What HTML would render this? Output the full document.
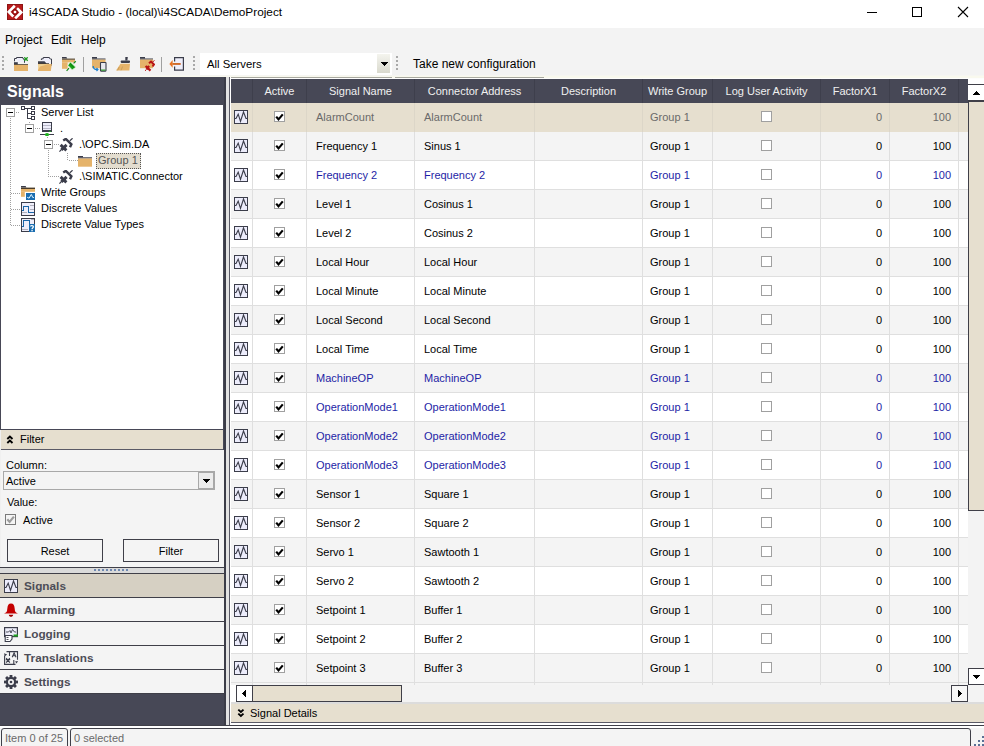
<!DOCTYPE html>
<html><head><meta charset="utf-8"><style>
html,body{margin:0;padding:0;}
body{width:984px;height:746px;overflow:hidden;position:relative;background:#f3f3f3;font-family:"Liberation Sans",sans-serif;}
.b{position:absolute;}
.t{position:absolute;white-space:nowrap;}
</style></head><body>
<div class="b" style="left:0px;top:0px;width:984px;height:28px;background:#fff;"></div>
<svg class="b" style="left:7px;top:4px" width="16" height="16" viewBox="0 0 16 16"><rect x="0.5" y="0.5" width="15" height="15" fill="#b81b1b" stroke="#8e1414"/><path d="M7.8 1.8 L1.7 7.9 L6.3 12.5" fill="none" stroke="#fff" stroke-width="2.7"/><path d="M10.0 4.2 L14.2 8.4 L8.2 14.4" fill="none" stroke="#fff" stroke-width="2.7"/><circle cx="8" cy="8" r="2.5" fill="none" stroke="#7e1010" stroke-width="0.9"/><circle cx="8" cy="8" r="1.3" fill="#fff"/></svg>
<div class="t" style="left:29px;top:7.01px;font-size:11.8px;line-height:11.8px;color:#000;">i4SCADA Studio - (local)\i4SCADA\DemoProject</div>
<svg class="b" style="left:860px;top:0px" width="124" height="28" viewBox="0 0 124 28" shape-rendering="crispEdges"><rect x="7" y="12" width="10" height="1" fill="#000"/><rect x="52.5" y="7.5" width="9" height="9" fill="none" stroke="#000" stroke-width="1"/></svg>
<svg class="b" style="left:957px;top:6px" width="12" height="12" viewBox="0 0 12 12"><path d="M1 1 L11 11 M11 1 L1 11" stroke="#000" stroke-width="1.1"/></svg>
<div class="b" style="left:0px;top:28px;width:984px;height:49px;background:#f3f3f3;"></div>
<div class="t" style="left:5px;top:33.84px;font-size:12px;line-height:12px;color:#000;">Project</div>
<div class="t" style="left:51px;top:33.84px;font-size:12px;line-height:12px;color:#000;">Edit</div>
<div class="t" style="left:81px;top:33.84px;font-size:12px;line-height:12px;color:#000;">Help</div>
<div class="b" style="left:2px;top:56px;width:2px;height:2px;background:#a9a9a9;"></div>
<div class="b" style="left:2px;top:60px;width:2px;height:2px;background:#a9a9a9;"></div>
<div class="b" style="left:2px;top:64px;width:2px;height:2px;background:#a9a9a9;"></div>
<div class="b" style="left:2px;top:68px;width:2px;height:2px;background:#a9a9a9;"></div>
<div class="b" style="left:193px;top:56px;width:2px;height:2px;background:#a9a9a9;"></div>
<div class="b" style="left:193px;top:60px;width:2px;height:2px;background:#a9a9a9;"></div>
<div class="b" style="left:193px;top:64px;width:2px;height:2px;background:#a9a9a9;"></div>
<div class="b" style="left:193px;top:68px;width:2px;height:2px;background:#a9a9a9;"></div>
<div class="b" style="left:396px;top:56px;width:2px;height:2px;background:#a9a9a9;"></div>
<div class="b" style="left:396px;top:60px;width:2px;height:2px;background:#a9a9a9;"></div>
<div class="b" style="left:396px;top:64px;width:2px;height:2px;background:#a9a9a9;"></div>
<div class="b" style="left:396px;top:68px;width:2px;height:2px;background:#a9a9a9;"></div>
<div class="b" style="left:83px;top:57px;width:1px;height:15px;background:#a0a0a0;"></div>
<div class="b" style="left:161px;top:57px;width:1px;height:15px;background:#a0a0a0;"></div>
<svg class="b" style="left:14px;top:57px" width="15" height="15" viewBox="0 0 15 15"><rect x="3" y="1" width="7" height="4" fill="#eeeefa"/><path d="M0.5 4.3 V1.5 H2.5 V0.5 H9 M8.6 1.4 H9.6 V2.4 H10.5 V5.8" fill="none" stroke="#3b3d4a" stroke-width="1"/><rect x="0" y="5.2" width="3.8" height="2.2" fill="#3b3d4a"/><rect x="0" y="7.2" width="14" height="0.8" fill="#4a3c2a"/><rect x="0" y="8" width="14" height="6" fill="#e5b36a"/><path d="M10.3 0.3 L13.7 3.7 M13.7 0.3 L10.3 3.7" stroke="#1a9a1a" stroke-width="1.3"/></svg>
<svg class="b" style="left:38px;top:57px" width="15" height="15" viewBox="0 0 15 15"><rect x="4" y="1" width="8" height="5" fill="#eeeefa"/><path d="M3.4 3 V1.8 H5.2 V0.5 H11.7 M11.3 1 L12.3 2 H13.5 V8.5" fill="none" stroke="#3b3d4a" stroke-width="1"/><path d="M0 4.3 H6.5 L8.5 6.5 H11 V7 H0 Z" fill="#3b3d4a"/><rect x="0" y="6.5" width="11" height="0.5" fill="#4a3c2a"/><path d="M0 7 H13.8 L12.8 14 H0 Z" fill="#e5b36a"/><path d="M0 7.2 H10 L2 9.5 L0 13 Z" fill="#f0d49a"/></svg>
<svg class="b" style="left:62px;top:57px" width="15" height="15" viewBox="0 0 15 15"><path d="M0 0 H4.4 L5.2 1.6 H0 Z" fill="#3b3d4a"/><rect x="0" y="1.6" width="13" height="1.2" fill="#4a3c2a"/><rect x="0" y="2.8" width="13" height="2.6" fill="#e5b36a"/><rect x="0" y="5.3" width="5.6" height="6.5" fill="#e5b36a"/><path d="M5.8 8.3 L8.4 5 L13.8 10.2 L10.2 12.9 Z" fill="#16a016" stroke="#e8f8e0" stroke-width="0.8"/><path d="M8.2 6.5 L12 10.8" stroke="#0a7a0a" stroke-width="0.8"/><path d="M4.6 13.8 L7 11.2 M11.6 6.4 L13.8 4.3" stroke="#1a8a1a" stroke-width="1.2"/></svg>
<svg class="b" style="left:92px;top:57px" width="15" height="15" viewBox="0 0 15 15"><rect x="0" y="0" width="5" height="1.6" fill="#3b3d4a"/><rect x="0" y="1.5" width="13.5" height="1.1" fill="#3b3d4a"/><rect x="0" y="2.6" width="13.5" height="8.6" fill="#e5b36a"/><rect x="8.5" y="5.5" width="5.5" height="8.6" rx="0.5" fill="#e8e8ee" stroke="#3b3d4a" stroke-width="1.1"/><rect x="9" y="12.5" width="4.5" height="1.2" fill="#30a030"/><path d="M1.2 9 Q1.2 12.5 5 12.5" fill="none" stroke="#1a7fd0" stroke-width="1.3"/><path d="M4.5 11 L6 12.5 L4.5 14" fill="none" stroke="#1a7fd0" stroke-width="1.1"/></svg>
<svg class="b" style="left:116px;top:57px" width="15" height="15" viewBox="0 0 15 15"><path d="M9.3 0 H11.8 L11.4 3.6 H9.3 Z" fill="#3b3d4a"/><rect x="4.7" y="3.4" width="9.3" height="2.5" rx="0.8" fill="#3b3d4a"/><path d="M4.5 6.8 H14 L13.4 13.6 H0 Z" fill="#e5b36a"/><path d="M3.2 10 L1.6 13.4 M6.6 9.5 L5 13.4" stroke="#b89050" stroke-width="0.6"/></svg>
<svg class="b" style="left:140px;top:57px" width="15" height="15" viewBox="0 0 15 15"><rect x="0" y="0" width="5" height="1.6" fill="#3b3d4a"/><rect x="0" y="1.5" width="13" height="1.1" fill="#3b3d4a"/><rect x="0" y="2.6" width="13" height="8.6" fill="#e5b36a"/><path d="M5.6 9 L10.5 13.6 M9 8.8 L6.5 12.5" stroke="#b81414" stroke-width="2.2"/><path d="M9 6.2 L11 4.5 L14 7.5 L12.5 9.5" fill="none" stroke="#b81414" stroke-width="2"/><path d="M12.5 5 L14.5 3.5 M5 13.8 L6.3 12.6" stroke="#b81414" stroke-width="1"/></svg>
<svg class="b" style="left:169px;top:57px" width="16" height="15" viewBox="0 0 16 15"><rect x="5.6" y="0.6" width="9" height="12.6" fill="#eeeefa"/><path d="M5.6 4.6 V0.6 H14.4 V13.2 H5.6 V9.6" fill="none" stroke="#3b3d4a" stroke-width="1.2"/><path d="M0.4 6.9 L3.6 3.1 V10.7 Z" fill="#e87020"/><rect x="3.4" y="6" width="8.3" height="1.9" fill="#d06a28"/></svg>
<div class="b" style="left:200px;top:53px;width:192px;height:22px;background:#fff;"></div>
<div class="t" style="left:207px;top:59.13px;font-size:11.3px;line-height:11.3px;color:#000;">All Servers</div>
<div class="b" style="left:377px;top:54px;width:13px;height:19px;background:linear-gradient(#f4f4ee,#d9d9cd);"></div>
<svg class="b" style="left:381px;top:62px" width="7" height="4" viewBox="0 0 7 4" shape-rendering="crispEdges"><path d="M0 0 H7 L3.5 4 Z" fill="#000"/></svg>
<div class="t" style="left:413px;top:58.14px;font-size:12px;line-height:12px;color:#000;">Take new configuration</div>
<div class="b" style="left:0px;top:75px;width:984px;height:1px;background:#f6f6f2;"></div>
<div class="b" style="left:0px;top:76px;width:984px;height:1px;background:#f9f9ee;"></div>
<div class="b" style="left:0px;top:77px;width:226px;height:649px;background:#474856;"></div>
<div class="b" style="left:224px;top:77px;width:2px;height:649px;background:#3c3d48;"></div>
<div class="t" style="left:7px;top:83.86px;font-size:16px;line-height:16px;color:#fff;font-weight:bold;">Signals</div>
<div class="b" style="left:0px;top:105px;width:224px;height:325px;background:#474856;"></div>
<div class="b" style="left:1px;top:105px;width:222px;height:324px;background:#fff;"></div>
<div class="b" style="left:10px;top:118px;width:1px;height:1px;background:#a0a0a0;"></div>
<div class="b" style="left:10px;top:120px;width:1px;height:1px;background:#a0a0a0;"></div>
<div class="b" style="left:10px;top:122px;width:1px;height:1px;background:#a0a0a0;"></div>
<div class="b" style="left:10px;top:124px;width:1px;height:1px;background:#a0a0a0;"></div>
<div class="b" style="left:10px;top:126px;width:1px;height:1px;background:#a0a0a0;"></div>
<div class="b" style="left:10px;top:128px;width:1px;height:1px;background:#a0a0a0;"></div>
<div class="b" style="left:10px;top:130px;width:1px;height:1px;background:#a0a0a0;"></div>
<div class="b" style="left:10px;top:132px;width:1px;height:1px;background:#a0a0a0;"></div>
<div class="b" style="left:10px;top:134px;width:1px;height:1px;background:#a0a0a0;"></div>
<div class="b" style="left:10px;top:136px;width:1px;height:1px;background:#a0a0a0;"></div>
<div class="b" style="left:10px;top:138px;width:1px;height:1px;background:#a0a0a0;"></div>
<div class="b" style="left:10px;top:140px;width:1px;height:1px;background:#a0a0a0;"></div>
<div class="b" style="left:10px;top:142px;width:1px;height:1px;background:#a0a0a0;"></div>
<div class="b" style="left:10px;top:144px;width:1px;height:1px;background:#a0a0a0;"></div>
<div class="b" style="left:10px;top:146px;width:1px;height:1px;background:#a0a0a0;"></div>
<div class="b" style="left:10px;top:148px;width:1px;height:1px;background:#a0a0a0;"></div>
<div class="b" style="left:10px;top:150px;width:1px;height:1px;background:#a0a0a0;"></div>
<div class="b" style="left:10px;top:152px;width:1px;height:1px;background:#a0a0a0;"></div>
<div class="b" style="left:10px;top:154px;width:1px;height:1px;background:#a0a0a0;"></div>
<div class="b" style="left:10px;top:156px;width:1px;height:1px;background:#a0a0a0;"></div>
<div class="b" style="left:10px;top:158px;width:1px;height:1px;background:#a0a0a0;"></div>
<div class="b" style="left:10px;top:160px;width:1px;height:1px;background:#a0a0a0;"></div>
<div class="b" style="left:10px;top:162px;width:1px;height:1px;background:#a0a0a0;"></div>
<div class="b" style="left:10px;top:164px;width:1px;height:1px;background:#a0a0a0;"></div>
<div class="b" style="left:10px;top:166px;width:1px;height:1px;background:#a0a0a0;"></div>
<div class="b" style="left:10px;top:168px;width:1px;height:1px;background:#a0a0a0;"></div>
<div class="b" style="left:10px;top:170px;width:1px;height:1px;background:#a0a0a0;"></div>
<div class="b" style="left:10px;top:172px;width:1px;height:1px;background:#a0a0a0;"></div>
<div class="b" style="left:10px;top:174px;width:1px;height:1px;background:#a0a0a0;"></div>
<div class="b" style="left:10px;top:176px;width:1px;height:1px;background:#a0a0a0;"></div>
<div class="b" style="left:10px;top:178px;width:1px;height:1px;background:#a0a0a0;"></div>
<div class="b" style="left:10px;top:180px;width:1px;height:1px;background:#a0a0a0;"></div>
<div class="b" style="left:10px;top:182px;width:1px;height:1px;background:#a0a0a0;"></div>
<div class="b" style="left:10px;top:184px;width:1px;height:1px;background:#a0a0a0;"></div>
<div class="b" style="left:10px;top:186px;width:1px;height:1px;background:#a0a0a0;"></div>
<div class="b" style="left:10px;top:188px;width:1px;height:1px;background:#a0a0a0;"></div>
<div class="b" style="left:10px;top:190px;width:1px;height:1px;background:#a0a0a0;"></div>
<div class="b" style="left:10px;top:192px;width:1px;height:1px;background:#a0a0a0;"></div>
<div class="b" style="left:10px;top:194px;width:1px;height:1px;background:#a0a0a0;"></div>
<div class="b" style="left:10px;top:196px;width:1px;height:1px;background:#a0a0a0;"></div>
<div class="b" style="left:10px;top:198px;width:1px;height:1px;background:#a0a0a0;"></div>
<div class="b" style="left:10px;top:200px;width:1px;height:1px;background:#a0a0a0;"></div>
<div class="b" style="left:10px;top:202px;width:1px;height:1px;background:#a0a0a0;"></div>
<div class="b" style="left:10px;top:204px;width:1px;height:1px;background:#a0a0a0;"></div>
<div class="b" style="left:10px;top:206px;width:1px;height:1px;background:#a0a0a0;"></div>
<div class="b" style="left:10px;top:208px;width:1px;height:1px;background:#a0a0a0;"></div>
<div class="b" style="left:10px;top:210px;width:1px;height:1px;background:#a0a0a0;"></div>
<div class="b" style="left:10px;top:212px;width:1px;height:1px;background:#a0a0a0;"></div>
<div class="b" style="left:10px;top:214px;width:1px;height:1px;background:#a0a0a0;"></div>
<div class="b" style="left:10px;top:216px;width:1px;height:1px;background:#a0a0a0;"></div>
<div class="b" style="left:10px;top:218px;width:1px;height:1px;background:#a0a0a0;"></div>
<div class="b" style="left:10px;top:220px;width:1px;height:1px;background:#a0a0a0;"></div>
<div class="b" style="left:10px;top:222px;width:1px;height:1px;background:#a0a0a0;"></div>
<div class="b" style="left:10px;top:224px;width:1px;height:1px;background:#a0a0a0;"></div>
<div class="b" style="left:16px;top:112px;width:1px;height:1px;background:#a0a0a0;"></div>
<div class="b" style="left:18px;top:112px;width:1px;height:1px;background:#a0a0a0;"></div>
<div class="b" style="left:11px;top:193px;width:1px;height:1px;background:#a0a0a0;"></div>
<div class="b" style="left:13px;top:193px;width:1px;height:1px;background:#a0a0a0;"></div>
<div class="b" style="left:15px;top:193px;width:1px;height:1px;background:#a0a0a0;"></div>
<div class="b" style="left:17px;top:193px;width:1px;height:1px;background:#a0a0a0;"></div>
<div class="b" style="left:19px;top:193px;width:1px;height:1px;background:#a0a0a0;"></div>
<div class="b" style="left:11px;top:209px;width:1px;height:1px;background:#a0a0a0;"></div>
<div class="b" style="left:13px;top:209px;width:1px;height:1px;background:#a0a0a0;"></div>
<div class="b" style="left:15px;top:209px;width:1px;height:1px;background:#a0a0a0;"></div>
<div class="b" style="left:17px;top:209px;width:1px;height:1px;background:#a0a0a0;"></div>
<div class="b" style="left:19px;top:209px;width:1px;height:1px;background:#a0a0a0;"></div>
<div class="b" style="left:11px;top:225px;width:1px;height:1px;background:#a0a0a0;"></div>
<div class="b" style="left:13px;top:225px;width:1px;height:1px;background:#a0a0a0;"></div>
<div class="b" style="left:15px;top:225px;width:1px;height:1px;background:#a0a0a0;"></div>
<div class="b" style="left:17px;top:225px;width:1px;height:1px;background:#a0a0a0;"></div>
<div class="b" style="left:19px;top:225px;width:1px;height:1px;background:#a0a0a0;"></div>
<div class="b" style="left:35px;top:128px;width:1px;height:1px;background:#a0a0a0;"></div>
<div class="b" style="left:37px;top:128px;width:1px;height:1px;background:#a0a0a0;"></div>
<div class="b" style="left:39px;top:128px;width:1px;height:1px;background:#a0a0a0;"></div>
<div class="b" style="left:47px;top:137px;width:1px;height:1px;background:#a0a0a0;"></div>
<div class="b" style="left:54px;top:144px;width:1px;height:1px;background:#a0a0a0;"></div>
<div class="b" style="left:56px;top:144px;width:1px;height:1px;background:#a0a0a0;"></div>
<div class="b" style="left:58px;top:144px;width:1px;height:1px;background:#a0a0a0;"></div>
<div class="b" style="left:48px;top:150px;width:1px;height:1px;background:#a0a0a0;"></div>
<div class="b" style="left:48px;top:152px;width:1px;height:1px;background:#a0a0a0;"></div>
<div class="b" style="left:48px;top:154px;width:1px;height:1px;background:#a0a0a0;"></div>
<div class="b" style="left:48px;top:156px;width:1px;height:1px;background:#a0a0a0;"></div>
<div class="b" style="left:48px;top:158px;width:1px;height:1px;background:#a0a0a0;"></div>
<div class="b" style="left:48px;top:160px;width:1px;height:1px;background:#a0a0a0;"></div>
<div class="b" style="left:48px;top:162px;width:1px;height:1px;background:#a0a0a0;"></div>
<div class="b" style="left:48px;top:164px;width:1px;height:1px;background:#a0a0a0;"></div>
<div class="b" style="left:48px;top:166px;width:1px;height:1px;background:#a0a0a0;"></div>
<div class="b" style="left:48px;top:168px;width:1px;height:1px;background:#a0a0a0;"></div>
<div class="b" style="left:48px;top:170px;width:1px;height:1px;background:#a0a0a0;"></div>
<div class="b" style="left:48px;top:172px;width:1px;height:1px;background:#a0a0a0;"></div>
<div class="b" style="left:48px;top:174px;width:1px;height:1px;background:#a0a0a0;"></div>
<div class="b" style="left:48px;top:176px;width:1px;height:1px;background:#a0a0a0;"></div>
<div class="b" style="left:50px;top:176px;width:1px;height:1px;background:#a0a0a0;"></div>
<div class="b" style="left:52px;top:176px;width:1px;height:1px;background:#a0a0a0;"></div>
<div class="b" style="left:54px;top:176px;width:1px;height:1px;background:#a0a0a0;"></div>
<div class="b" style="left:56px;top:176px;width:1px;height:1px;background:#a0a0a0;"></div>
<div class="b" style="left:58px;top:176px;width:1px;height:1px;background:#a0a0a0;"></div>
<div class="b" style="left:67px;top:153px;width:1px;height:1px;background:#a0a0a0;"></div>
<div class="b" style="left:67px;top:155px;width:1px;height:1px;background:#a0a0a0;"></div>
<div class="b" style="left:67px;top:157px;width:1px;height:1px;background:#a0a0a0;"></div>
<div class="b" style="left:67px;top:159px;width:1px;height:1px;background:#a0a0a0;"></div>
<div class="b" style="left:69px;top:160px;width:1px;height:1px;background:#a0a0a0;"></div>
<div class="b" style="left:71px;top:160px;width:1px;height:1px;background:#a0a0a0;"></div>
<div class="b" style="left:73px;top:160px;width:1px;height:1px;background:#a0a0a0;"></div>
<div class="b" style="left:75px;top:160px;width:1px;height:1px;background:#a0a0a0;"></div>
<div class="b" style="left:77px;top:160px;width:1px;height:1px;background:#a0a0a0;"></div>
<svg class="b" style="left:6px;top:108px" width="9" height="9" viewBox="0 0 9 9" shape-rendering="crispEdges"><rect x="0.5" y="0.5" width="8" height="8" fill="#fff" stroke="#a0a0a0"/><rect x="2" y="4" width="5" height="1" fill="#000"/></svg>
<svg class="b" style="left:25px;top:124px" width="9" height="9" viewBox="0 0 9 9" shape-rendering="crispEdges"><rect x="0.5" y="0.5" width="8" height="8" fill="#fff" stroke="#a0a0a0"/><rect x="2" y="4" width="5" height="1" fill="#000"/></svg>
<svg class="b" style="left:44px;top:140px" width="9" height="9" viewBox="0 0 9 9" shape-rendering="crispEdges"><rect x="0.5" y="0.5" width="8" height="8" fill="#fff" stroke="#a0a0a0"/><rect x="2" y="4" width="5" height="1" fill="#000"/></svg>
<svg class="b" style="left:21px;top:106px" width="15" height="15" viewBox="0 0 15 15" shape-rendering="crispEdges"><rect x="0.5" y="0.5" width="3" height="3" fill="#fff" stroke="#3b3d4a"/><rect x="10.5" y="0.5" width="3" height="3" fill="#fff" stroke="#3b3d4a"/><rect x="10.5" y="5.5" width="3" height="3" fill="#fff" stroke="#3b3d4a"/><rect x="10.5" y="10.5" width="3" height="3" fill="#fff" stroke="#3b3d4a"/><path d="M4 2 H10 M6.5 2 V12 H10 M6.5 7 H10" fill="none" stroke="#3b3d4a"/></svg>
<div class="b" style="left:29px;top:122px;width:1px;height:1px;background:#a0a0a0;"></div>
<div class="t" style="left:41px;top:107.49px;font-size:11px;line-height:11px;color:#000;">Server List</div>
<svg class="b" style="left:40px;top:121px" width="15" height="15" viewBox="0 0 15 15" shape-rendering="crispEdges"><rect x="2" y="1" width="10" height="10" fill="#3b3d4a"/><rect x="3" y="2" width="8" height="7" fill="#eeeefa"/><rect x="3" y="4" width="8" height="1" fill="#b8b8c8"/><rect x="3" y="7" width="8" height="1" fill="#b8b8c8"/><rect x="9" y="10" width="2" height="1" fill="#2a9a2a"/><rect x="0" y="13" width="14" height="1" fill="#3b3d4a"/></svg>
<svg class="b" style="left:40px;top:121px" width="15" height="15" viewBox="0 0 15 15"><ellipse cx="7" cy="13.5" rx="2.2" ry="1.6" fill="#20b020"/></svg>
<div class="t" style="left:60px;top:123.49px;font-size:11px;line-height:11px;color:#000;">.</div>
<svg class="b" style="left:59px;top:138px" width="14" height="15" viewBox="0 0 14 15"><path d="M0.4 13.6 L3 11" stroke="#3b3d4a" stroke-width="1.2"/><path d="M1.6 6.9 L7.4 12.4 M7.6 6.9 L2.4 11.9" stroke="#3b3d4a" stroke-width="2.9"/><path d="M4.2 2.6 L6.8 0.9 L12.4 6.3 L11 9.2" fill="none" stroke="#3b3d4a" stroke-width="2.4"/><path d="M10.8 2.8 L13.6 0.3" stroke="#3b3d4a" stroke-width="1.2"/></svg>
<div class="t" style="left:79px;top:139.49px;font-size:11px;line-height:11px;color:#000;">.\OPC.Sim.DA</div>
<svg class="b" style="left:78px;top:156px" width="15" height="12" viewBox="0 0 15 12"><rect x="0" y="0" width="5" height="1.4" fill="#3b3d4a"/><rect x="0" y="1.3" width="14" height="1.2" fill="#3b3d4a"/><rect x="0" y="2.5" width="14" height="8.2" fill="#e5b36a"/></svg>
<div class="b" style="left:96px;top:153px;width:45px;height:16px;background:#e3ddcf;outline:1px dotted #555;outline-offset:-1px"></div>
<div class="t" style="left:98px;top:155.49px;font-size:11px;line-height:11px;color:#555;">Group 1</div>
<svg class="b" style="left:59px;top:170px" width="14" height="15" viewBox="0 0 14 15"><path d="M0.4 13.6 L3 11" stroke="#3b3d4a" stroke-width="1.2"/><path d="M1.6 6.9 L7.4 12.4 M7.6 6.9 L2.4 11.9" stroke="#3b3d4a" stroke-width="2.9"/><path d="M4.2 2.6 L6.8 0.9 L12.4 6.3 L11 9.2" fill="none" stroke="#3b3d4a" stroke-width="2.4"/><path d="M10.8 2.8 L13.6 0.3" stroke="#3b3d4a" stroke-width="1.2"/></svg>
<div class="t" style="left:79px;top:171.49px;font-size:11px;line-height:11px;color:#000;">.\SIMATIC.Connector</div>
<svg class="b" style="left:21px;top:186px" width="15" height="14" viewBox="0 0 15 14"><path d="M0 0 H4.6 L5.4 1.6 H0 Z" fill="#3b3d4a"/><rect x="0" y="1.6" width="14" height="1.4" fill="#4a3c2a"/><rect x="0" y="3" width="14" height="2.8" fill="#e5b36a"/><rect x="0" y="5.7" width="3.8" height="5.1" fill="#e5b36a"/><rect x="5" y="7" width="9" height="7" fill="#1a6db0"/><path d="M6.2 11.3 L8.1 12.2 L10.3 8.4 L11.8 11.5 L12.9 11.5" fill="none" stroke="#e0f4ff" stroke-width="1"/></svg>
<div class="t" style="left:41px;top:187.49px;font-size:11px;line-height:11px;color:#000;">Write Groups</div>
<svg class="b" style="left:21px;top:202px" width="14" height="14" viewBox="0 0 14 14" shape-rendering="crispEdges"><rect x="0.5" y="0.5" width="13" height="13" fill="#eeeefa" stroke="#3b3d4a"/><path d="M9 3.5 H13 M9 7.5 H13 M1 10.5 H5.5" stroke="#b0b0bc"/><path d="M0.5 8.5 H2.5 V4.5 H7.5 V10.5 H13" fill="none" stroke="#1a66a8"/></svg>
<div class="t" style="left:41px;top:203.49px;font-size:11px;line-height:11px;color:#000;">Discrete Values</div>
<svg class="b" style="left:21px;top:218px" width="14" height="14" viewBox="0 0 14 14" shape-rendering="crispEdges"><rect x="0.5" y="0.5" width="13" height="13" fill="#eeeefa" stroke="#3b3d4a"/><path d="M10 1.5 H13 M1 11.5 H6.5" stroke="#b0b0bc"/><path d="M0.5 8.5 H2.5 V2.5 H8.3 V5.5" fill="none" stroke="#1a66a8"/><rect x="8" y="6" width="6" height="8" fill="#1a6db0"/></svg>
<svg class="b" style="left:21px;top:218px" width="14" height="14" viewBox="0 0 14 14"><path d="M9.6 8.6 C9.6 7.2 12.4 7.2 12.4 8.8 C12.4 10 11 10 11 11.2" fill="none" stroke="#fff" stroke-width="1.2"/><rect x="10.4" y="12" width="1.3" height="1.3" fill="#fff"/></svg>
<div class="t" style="left:41px;top:219.49px;font-size:11px;line-height:11px;color:#000;">Discrete Value Types</div>
<div class="b" style="left:0px;top:430px;width:1px;height:137px;background:#f0f0f0;"></div>
<div class="b" style="left:1px;top:430px;width:222px;height:19px;background:#e6dfcf;"></div>
<div class="b" style="left:1px;top:449px;width:222px;height:1px;background:#5a5a66;"></div>
<svg class="b" style="left:6px;top:435px" width="8" height="10" viewBox="0 0 8 10"><path d="M1.3 4 L3.9 1.6 L6.5 4 M1.3 8 L3.9 5.6 L6.5 8" fill="none" stroke="#000" stroke-width="1.9"/></svg>
<div class="t" style="left:20px;top:434.19px;font-size:11px;line-height:11px;color:#000;">Filter</div>
<div class="b" style="left:1px;top:450px;width:223px;height:117px;background:#f4f4f4;"></div>
<div class="t" style="left:6px;top:460.19px;font-size:11px;line-height:11px;color:#000;">Column:</div>
<div class="b" style="left:3px;top:471px;width:212px;height:19px;background:#a8a8a8;"></div>
<div class="b" style="left:4px;top:472px;width:210px;height:17px;background:#f4f4f4;"></div>
<div class="t" style="left:6px;top:475.69px;font-size:11px;line-height:11px;color:#000;">Active</div>
<div class="b" style="left:198px;top:472px;width:16px;height:17px;background:#a8a8a8;"></div>
<div class="b" style="left:199px;top:473px;width:14px;height:15px;background:#ececec;"></div>
<svg class="b" style="left:203px;top:479px" width="7" height="4" viewBox="0 0 7 4" shape-rendering="crispEdges"><path d="M0 0 H7 L3.5 4 Z" fill="#000"/></svg>
<div class="t" style="left:7px;top:497.19px;font-size:11px;line-height:11px;color:#000;">Value:</div>
<div class="b" style="left:5px;top:514px;width:11px;height:11px;background:#7a7a7a;"></div>
<div class="b" style="left:6px;top:515px;width:9px;height:9px;background:#f4f4f4;"></div>
<svg class="b" style="left:6px;top:515px" width="9" height="9" viewBox="0 0 9 9"><path d="M1.3 4.3 L3.6 6.9 L7.9 1.6" fill="none" stroke="#9c9c9c" stroke-width="2.2"/></svg>
<div class="t" style="left:23px;top:514.69px;font-size:11px;line-height:11px;color:#000;">Active</div>
<div class="b" style="left:7px;top:539px;width:96px;height:23px;background:#3f3f48;"></div>
<div class="b" style="left:8px;top:540px;width:94px;height:21px;background:#f4f4f4;"></div>
<div class="t" style="left:-95px;width:300px;text-align:center;top:545.69px;font-size:11px;line-height:11px;color:#000;">Reset</div>
<div class="b" style="left:123px;top:539px;width:96px;height:23px;background:#3f3f48;"></div>
<div class="b" style="left:124px;top:540px;width:94px;height:21px;background:#f4f4f4;"></div>
<div class="t" style="left:21px;width:300px;text-align:center;top:545.69px;font-size:11px;line-height:11px;color:#000;">Filter</div>
<div class="b" style="left:0px;top:567px;width:224px;height:1px;background:#3f3f48;"></div>
<div class="b" style="left:0px;top:568px;width:224px;height:5px;background:#dadada;"></div>
<div class="b" style="left:94px;top:569px;width:2px;height:2px;background:#6f88b0;"></div>
<div class="b" style="left:98px;top:569px;width:2px;height:2px;background:#6f88b0;"></div>
<div class="b" style="left:102px;top:569px;width:2px;height:2px;background:#6f88b0;"></div>
<div class="b" style="left:106px;top:569px;width:2px;height:2px;background:#6f88b0;"></div>
<div class="b" style="left:110px;top:569px;width:2px;height:2px;background:#6f88b0;"></div>
<div class="b" style="left:114px;top:569px;width:2px;height:2px;background:#6f88b0;"></div>
<div class="b" style="left:118px;top:569px;width:2px;height:2px;background:#6f88b0;"></div>
<div class="b" style="left:122px;top:569px;width:2px;height:2px;background:#6f88b0;"></div>
<div class="b" style="left:126px;top:569px;width:2px;height:2px;background:#6f88b0;"></div>
<div class="b" style="left:0px;top:573px;width:224px;height:1px;background:#3f3f48;"></div>
<div class="b" style="left:0px;top:574px;width:224px;height:23px;background:#d6d0c3;"></div>
<div class="b" style="left:0px;top:597px;width:224px;height:1px;background:#3f3f48;"></div>
<div class="t" style="left:24px;top:581.01px;font-size:11.8px;line-height:11.8px;color:#4d4d57;font-weight:bold;">Signals</div>
<div class="b" style="left:0px;top:598px;width:224px;height:23px;background:#f4f4f4;"></div>
<div class="b" style="left:0px;top:621px;width:224px;height:1px;background:#3f3f48;"></div>
<div class="t" style="left:24px;top:605.01px;font-size:11.8px;line-height:11.8px;color:#4d4d57;font-weight:bold;">Alarming</div>
<div class="b" style="left:0px;top:622px;width:224px;height:23px;background:#f4f4f4;"></div>
<div class="b" style="left:0px;top:645px;width:224px;height:1px;background:#3f3f48;"></div>
<div class="t" style="left:24px;top:629.01px;font-size:11.8px;line-height:11.8px;color:#4d4d57;font-weight:bold;">Logging</div>
<div class="b" style="left:0px;top:646px;width:224px;height:23px;background:#f4f4f4;"></div>
<div class="b" style="left:0px;top:669px;width:224px;height:1px;background:#3f3f48;"></div>
<div class="t" style="left:24px;top:653.01px;font-size:11.8px;line-height:11.8px;color:#4d4d57;font-weight:bold;">Translations</div>
<div class="b" style="left:0px;top:670px;width:224px;height:23px;background:#f4f4f4;"></div>
<div class="b" style="left:0px;top:693px;width:224px;height:1px;background:#3f3f48;"></div>
<div class="t" style="left:24px;top:677.01px;font-size:11.8px;line-height:11.8px;color:#4d4d57;font-weight:bold;">Settings</div>
<svg class="b" style="left:4px;top:579px" width="14" height="14" viewBox="0 0 14 14" shape-rendering="crispEdges"><rect x="0.5" y="0.5" width="13" height="13" fill="#ececfb" stroke="#3b3d4a"/></svg>
<svg class="b" style="left:4px;top:579px" width="14" height="14" viewBox="0 0 14 14"><path d="M1 8.5 L2 8.5 L4.2 4.2 L6.5 11.5 L9.5 2 L12 8.5 L13 8.5" fill="none" stroke="#3b3d4a" stroke-width="1.1"/></svg>
<svg class="b" style="left:4px;top:603px" width="14" height="15" viewBox="0 0 14 15"><path d="M7 0.5 C4.5 0.5 3.6 2.5 3.4 5 L3 8 C2.7 9.2 1.5 9.8 0 10.5 H14 C12.5 9.8 11.3 9.2 11 8 L10.6 5 C10.4 2.5 9.5 0.5 7 0.5 Z" fill="#c40000"/><path d="M4.8 11.8 H9.2 C9 13.2 8 13.8 7 13.8 C6 13.8 5 13.2 4.8 11.8 Z" fill="#a00000"/></svg>
<svg class="b" style="left:4px;top:627px" width="15" height="16" viewBox="0 0 15 16"><rect x="0.6" y="0.6" width="12.8" height="9" fill="#eeeefa" stroke="#3b3d4a" stroke-width="1.2"/><path d="M2 5 H4.5 L6 3.5 L7 6 L8.5 2.5 L10.5 5 H12" fill="none" stroke="#3b3d4a" stroke-width="0.9"/><rect x="9.5" y="7.5" width="4.5" height="2" fill="#20a020"/><path d="M1.2 8.5 H8 V12 L6 14.5 H1.2 Z" fill="#fff" stroke="#3b3d4a" stroke-width="1.1"/><path d="M2.5 10.5 H4.5 M2.5 12.5 H4.5" stroke="#3b3d4a" stroke-width="0.9"/></svg>
<svg class="b" style="left:4px;top:651px" width="15" height="15" viewBox="0 0 15 15"><g fill="none" stroke="#3b3d4a" stroke-width="1.1"><path d="M2.5 0.6 H13.5 V8.8 M0.6 4.5 V13.4 H11.5 M5.5 0.6 V5 M9.8 9 V13.4"/><path d="M8.2 6.2 L10.1 1.8 L12 6.2 M8.8 4.8 H11.4"/><path d="M2.2 7.2 L5.8 11.6 M5.8 7.2 L2.2 11.6 M1.8 8.6 H6.2"/></g><path d="M0 2.2 L3.2 3.6 L0.8 5.2 Z M14 10 L11 10.4 L12.6 12.6 Z" fill="#3b3d4a"/></svg>
<svg class="b" style="left:4px;top:675px" width="14" height="14" viewBox="0 0 14 14"><g fill="#3b3d4a"><circle cx="7" cy="7" r="5.2"/><rect x="5.6" y="0" width="2.8" height="14"/><rect x="0" y="5.6" width="14" height="2.8"/><rect x="5.6" y="0" width="2.8" height="14" transform="rotate(45 7 7)"/><rect x="5.6" y="0" width="2.8" height="14" transform="rotate(-45 7 7)"/></g><circle cx="7" cy="7" r="3" fill="#f4f4f4"/><circle cx="7" cy="7" r="1.3" fill="#3b3d4a"/></svg>
<div class="b" style="left:226px;top:77px;width:3px;height:649px;background:#e3e3e3;"></div>
<div class="b" style="left:229px;top:77px;width:1px;height:649px;background:#5a5a66;"></div>
<div class="b" style="left:230px;top:77px;width:1px;height:649px;background:#fff;"></div>
<div class="b" style="left:231px;top:77px;width:753px;height:649px;background:#f3f3f3;"></div>
<div class="b" style="left:231px;top:77px;width:753px;height:1px;background:#f9f9ee;"></div>
<div class="b" style="left:231px;top:77px;width:161px;height:1px;background:#a8a8a0;"></div>
<div class="b" style="left:395px;top:77px;width:149px;height:1px;background:#a8a8a0;"></div>
<div class="b" style="left:231px;top:78px;width:753px;height:1px;background:#fdfdfd;"></div>
<div class="b" style="left:231px;top:79px;width:737px;height:24px;background:#474856;"></div>
<div class="b" style="left:252px;top:79px;width:1px;height:24px;background:#3e3f4c;"></div>
<div class="b" style="left:306px;top:79px;width:1px;height:24px;background:#3e3f4c;"></div>
<div class="b" style="left:414px;top:79px;width:1px;height:24px;background:#3e3f4c;"></div>
<div class="b" style="left:534px;top:79px;width:1px;height:24px;background:#3e3f4c;"></div>
<div class="b" style="left:642px;top:79px;width:1px;height:24px;background:#3e3f4c;"></div>
<div class="b" style="left:712px;top:79px;width:1px;height:24px;background:#3e3f4c;"></div>
<div class="b" style="left:820px;top:79px;width:1px;height:24px;background:#3e3f4c;"></div>
<div class="b" style="left:889px;top:79px;width:1px;height:24px;background:#3e3f4c;"></div>
<div class="b" style="left:958px;top:79px;width:1px;height:24px;background:#3e3f4c;"></div>
<div class="t" style="left:129.5px;width:300px;text-align:center;top:85.69px;font-size:11px;line-height:11px;color:#f0f0f0;">Active</div>
<div class="t" style="left:210.5px;width:300px;text-align:center;top:85.69px;font-size:11px;line-height:11px;color:#f0f0f0;">Signal Name</div>
<div class="t" style="left:324.5px;width:300px;text-align:center;top:85.69px;font-size:11px;line-height:11px;color:#f0f0f0;">Connector Address</div>
<div class="t" style="left:438.5px;width:300px;text-align:center;top:85.69px;font-size:11px;line-height:11px;color:#f0f0f0;">Description</div>
<div class="t" style="left:527.5px;width:300px;text-align:center;top:85.69px;font-size:11px;line-height:11px;color:#f0f0f0;">Write Group</div>
<div class="t" style="left:616.5px;width:300px;text-align:center;top:85.69px;font-size:11px;line-height:11px;color:#f0f0f0;">Log User Activity</div>
<div class="t" style="left:705.0px;width:300px;text-align:center;top:85.69px;font-size:11px;line-height:11px;color:#f0f0f0;">FactorX1</div>
<div class="t" style="left:774.0px;width:300px;text-align:center;top:85.69px;font-size:11px;line-height:11px;color:#f0f0f0;">FactorX2</div>
<div class="b" style="left:231px;top:103px;width:737px;height:582px;background:#fff;"></div>
<div class="b" style="left:231px;top:103px;width:737px;height:28px;background:#e6dfcf;"></div>
<div class="b" style="left:231px;top:131px;width:737px;height:1px;background:#e6dfcf;"></div>
<div class="b" style="left:252px;top:103px;width:1px;height:29px;background:#dcd6c8;"></div>
<div class="b" style="left:306px;top:103px;width:1px;height:29px;background:#dcd6c8;"></div>
<div class="b" style="left:414px;top:103px;width:1px;height:29px;background:#dcd6c8;"></div>
<div class="b" style="left:534px;top:103px;width:1px;height:29px;background:#dcd6c8;"></div>
<div class="b" style="left:642px;top:103px;width:1px;height:29px;background:#dcd6c8;"></div>
<div class="b" style="left:712px;top:103px;width:1px;height:29px;background:#dcd6c8;"></div>
<div class="b" style="left:820px;top:103px;width:1px;height:29px;background:#dcd6c8;"></div>
<div class="b" style="left:889px;top:103px;width:1px;height:29px;background:#dcd6c8;"></div>
<div class="b" style="left:958px;top:103px;width:1px;height:29px;background:#dcd6c8;"></div>
<svg class="b" style="left:234px;top:110px" width="14" height="14" viewBox="0 0 14 14" shape-rendering="crispEdges"><rect x="0.5" y="0.5" width="13" height="13" fill="#ececfb" stroke="#3b3d4a"/></svg>
<svg class="b" style="left:234px;top:110px" width="14" height="14" viewBox="0 0 14 14"><path d="M1 8.5 L2 8.5 L4.2 4.2 L6.5 11.5 L9.5 2 L12 8.5 L13 8.5" fill="none" stroke="#3b3d4a" stroke-width="1.1"/></svg>
<svg class="b" style="left:274px;top:111px" width="11" height="11" viewBox="0 0 11 11" shape-rendering="crispEdges"><rect x="0.5" y="0.5" width="10" height="10" fill="#fff" stroke="#a0a0a0"/></svg>
<svg class="b" style="left:274px;top:111px" width="11" height="11" viewBox="0 0 11 11"><path d="M2.2 5.6 L4.5 8.4 L8.8 3.4" fill="none" stroke="#000" stroke-width="2.2"/></svg>
<div class="t" style="left:316px;top:111.69px;font-size:11px;line-height:11px;color:#6a6a6a;">AlarmCount</div>
<div class="t" style="left:424px;top:111.69px;font-size:11px;line-height:11px;color:#6a6a6a;">AlarmCount</div>
<div class="t" style="left:650px;top:111.69px;font-size:11px;line-height:11px;color:#6a6a6a;">Group 1</div>
<svg class="b" style="left:761px;top:111px" width="12" height="12" viewBox="0 0 12 12" shape-rendering="crispEdges"><rect x="0.5" y="0.5" width="10" height="10" fill="#fff" stroke="#a0a0a0"/></svg>
<div class="t" style="left:682px;width:200px;text-align:right;top:111.69px;font-size:11px;line-height:11px;color:#6a6a6a;">0</div>
<div class="t" style="left:751px;width:200px;text-align:right;top:111.69px;font-size:11px;line-height:11px;color:#6a6a6a;">100</div>
<div class="b" style="left:231px;top:132px;width:737px;height:28px;background:#f4f4f4;"></div>
<div class="b" style="left:231px;top:160px;width:737px;height:1px;background:#dfdfdf;"></div>
<div class="b" style="left:252px;top:132px;width:1px;height:29px;background:#dfdfdf;"></div>
<div class="b" style="left:306px;top:132px;width:1px;height:29px;background:#dfdfdf;"></div>
<div class="b" style="left:414px;top:132px;width:1px;height:29px;background:#dfdfdf;"></div>
<div class="b" style="left:534px;top:132px;width:1px;height:29px;background:#dfdfdf;"></div>
<div class="b" style="left:642px;top:132px;width:1px;height:29px;background:#dfdfdf;"></div>
<div class="b" style="left:712px;top:132px;width:1px;height:29px;background:#dfdfdf;"></div>
<div class="b" style="left:820px;top:132px;width:1px;height:29px;background:#dfdfdf;"></div>
<div class="b" style="left:889px;top:132px;width:1px;height:29px;background:#dfdfdf;"></div>
<div class="b" style="left:958px;top:132px;width:1px;height:29px;background:#dfdfdf;"></div>
<svg class="b" style="left:234px;top:139px" width="14" height="14" viewBox="0 0 14 14" shape-rendering="crispEdges"><rect x="0.5" y="0.5" width="13" height="13" fill="#ececfb" stroke="#3b3d4a"/></svg>
<svg class="b" style="left:234px;top:139px" width="14" height="14" viewBox="0 0 14 14"><path d="M1 8.5 L2 8.5 L4.2 4.2 L6.5 11.5 L9.5 2 L12 8.5 L13 8.5" fill="none" stroke="#3b3d4a" stroke-width="1.1"/></svg>
<svg class="b" style="left:274px;top:140px" width="11" height="11" viewBox="0 0 11 11" shape-rendering="crispEdges"><rect x="0.5" y="0.5" width="10" height="10" fill="#fff" stroke="#a0a0a0"/></svg>
<svg class="b" style="left:274px;top:140px" width="11" height="11" viewBox="0 0 11 11"><path d="M2.2 5.6 L4.5 8.4 L8.8 3.4" fill="none" stroke="#000" stroke-width="2.2"/></svg>
<div class="t" style="left:316px;top:140.69px;font-size:11px;line-height:11px;color:#000;">Frequency 1</div>
<div class="t" style="left:424px;top:140.69px;font-size:11px;line-height:11px;color:#000;">Sinus 1</div>
<div class="t" style="left:650px;top:140.69px;font-size:11px;line-height:11px;color:#000;">Group 1</div>
<svg class="b" style="left:761px;top:140px" width="12" height="12" viewBox="0 0 12 12" shape-rendering="crispEdges"><rect x="0.5" y="0.5" width="10" height="10" fill="#fff" stroke="#a0a0a0"/></svg>
<div class="t" style="left:682px;width:200px;text-align:right;top:140.69px;font-size:11px;line-height:11px;color:#000;">0</div>
<div class="t" style="left:751px;width:200px;text-align:right;top:140.69px;font-size:11px;line-height:11px;color:#000;">100</div>
<div class="b" style="left:231px;top:161px;width:737px;height:28px;background:#fff;"></div>
<div class="b" style="left:231px;top:189px;width:737px;height:1px;background:#dfdfdf;"></div>
<div class="b" style="left:252px;top:161px;width:1px;height:29px;background:#dfdfdf;"></div>
<div class="b" style="left:306px;top:161px;width:1px;height:29px;background:#dfdfdf;"></div>
<div class="b" style="left:414px;top:161px;width:1px;height:29px;background:#dfdfdf;"></div>
<div class="b" style="left:534px;top:161px;width:1px;height:29px;background:#dfdfdf;"></div>
<div class="b" style="left:642px;top:161px;width:1px;height:29px;background:#dfdfdf;"></div>
<div class="b" style="left:712px;top:161px;width:1px;height:29px;background:#dfdfdf;"></div>
<div class="b" style="left:820px;top:161px;width:1px;height:29px;background:#dfdfdf;"></div>
<div class="b" style="left:889px;top:161px;width:1px;height:29px;background:#dfdfdf;"></div>
<div class="b" style="left:958px;top:161px;width:1px;height:29px;background:#dfdfdf;"></div>
<svg class="b" style="left:234px;top:168px" width="14" height="14" viewBox="0 0 14 14" shape-rendering="crispEdges"><rect x="0.5" y="0.5" width="13" height="13" fill="#ececfb" stroke="#3b3d4a"/></svg>
<svg class="b" style="left:234px;top:168px" width="14" height="14" viewBox="0 0 14 14"><path d="M1 8.5 L2 8.5 L4.2 4.2 L6.5 11.5 L9.5 2 L12 8.5 L13 8.5" fill="none" stroke="#3b3d4a" stroke-width="1.1"/></svg>
<svg class="b" style="left:274px;top:169px" width="11" height="11" viewBox="0 0 11 11" shape-rendering="crispEdges"><rect x="0.5" y="0.5" width="10" height="10" fill="#fff" stroke="#a0a0a0"/></svg>
<svg class="b" style="left:274px;top:169px" width="11" height="11" viewBox="0 0 11 11"><path d="M2.2 5.6 L4.5 8.4 L8.8 3.4" fill="none" stroke="#000" stroke-width="2.2"/></svg>
<div class="t" style="left:316px;top:169.69px;font-size:11px;line-height:11px;color:#1e1ea6;">Frequency 2</div>
<div class="t" style="left:424px;top:169.69px;font-size:11px;line-height:11px;color:#1e1ea6;">Frequency 2</div>
<div class="t" style="left:650px;top:169.69px;font-size:11px;line-height:11px;color:#1e1ea6;">Group 1</div>
<svg class="b" style="left:761px;top:169px" width="12" height="12" viewBox="0 0 12 12" shape-rendering="crispEdges"><rect x="0.5" y="0.5" width="10" height="10" fill="#fff" stroke="#a0a0a0"/></svg>
<div class="t" style="left:682px;width:200px;text-align:right;top:169.69px;font-size:11px;line-height:11px;color:#1e1ea6;">0</div>
<div class="t" style="left:751px;width:200px;text-align:right;top:169.69px;font-size:11px;line-height:11px;color:#1e1ea6;">100</div>
<div class="b" style="left:231px;top:190px;width:737px;height:28px;background:#f4f4f4;"></div>
<div class="b" style="left:231px;top:218px;width:737px;height:1px;background:#dfdfdf;"></div>
<div class="b" style="left:252px;top:190px;width:1px;height:29px;background:#dfdfdf;"></div>
<div class="b" style="left:306px;top:190px;width:1px;height:29px;background:#dfdfdf;"></div>
<div class="b" style="left:414px;top:190px;width:1px;height:29px;background:#dfdfdf;"></div>
<div class="b" style="left:534px;top:190px;width:1px;height:29px;background:#dfdfdf;"></div>
<div class="b" style="left:642px;top:190px;width:1px;height:29px;background:#dfdfdf;"></div>
<div class="b" style="left:712px;top:190px;width:1px;height:29px;background:#dfdfdf;"></div>
<div class="b" style="left:820px;top:190px;width:1px;height:29px;background:#dfdfdf;"></div>
<div class="b" style="left:889px;top:190px;width:1px;height:29px;background:#dfdfdf;"></div>
<div class="b" style="left:958px;top:190px;width:1px;height:29px;background:#dfdfdf;"></div>
<svg class="b" style="left:234px;top:197px" width="14" height="14" viewBox="0 0 14 14" shape-rendering="crispEdges"><rect x="0.5" y="0.5" width="13" height="13" fill="#ececfb" stroke="#3b3d4a"/></svg>
<svg class="b" style="left:234px;top:197px" width="14" height="14" viewBox="0 0 14 14"><path d="M1 8.5 L2 8.5 L4.2 4.2 L6.5 11.5 L9.5 2 L12 8.5 L13 8.5" fill="none" stroke="#3b3d4a" stroke-width="1.1"/></svg>
<svg class="b" style="left:274px;top:198px" width="11" height="11" viewBox="0 0 11 11" shape-rendering="crispEdges"><rect x="0.5" y="0.5" width="10" height="10" fill="#fff" stroke="#a0a0a0"/></svg>
<svg class="b" style="left:274px;top:198px" width="11" height="11" viewBox="0 0 11 11"><path d="M2.2 5.6 L4.5 8.4 L8.8 3.4" fill="none" stroke="#000" stroke-width="2.2"/></svg>
<div class="t" style="left:316px;top:198.69px;font-size:11px;line-height:11px;color:#000;">Level 1</div>
<div class="t" style="left:424px;top:198.69px;font-size:11px;line-height:11px;color:#000;">Cosinus 1</div>
<div class="t" style="left:650px;top:198.69px;font-size:11px;line-height:11px;color:#000;">Group 1</div>
<svg class="b" style="left:761px;top:198px" width="12" height="12" viewBox="0 0 12 12" shape-rendering="crispEdges"><rect x="0.5" y="0.5" width="10" height="10" fill="#fff" stroke="#a0a0a0"/></svg>
<div class="t" style="left:682px;width:200px;text-align:right;top:198.69px;font-size:11px;line-height:11px;color:#000;">0</div>
<div class="t" style="left:751px;width:200px;text-align:right;top:198.69px;font-size:11px;line-height:11px;color:#000;">100</div>
<div class="b" style="left:231px;top:219px;width:737px;height:28px;background:#fff;"></div>
<div class="b" style="left:231px;top:247px;width:737px;height:1px;background:#dfdfdf;"></div>
<div class="b" style="left:252px;top:219px;width:1px;height:29px;background:#dfdfdf;"></div>
<div class="b" style="left:306px;top:219px;width:1px;height:29px;background:#dfdfdf;"></div>
<div class="b" style="left:414px;top:219px;width:1px;height:29px;background:#dfdfdf;"></div>
<div class="b" style="left:534px;top:219px;width:1px;height:29px;background:#dfdfdf;"></div>
<div class="b" style="left:642px;top:219px;width:1px;height:29px;background:#dfdfdf;"></div>
<div class="b" style="left:712px;top:219px;width:1px;height:29px;background:#dfdfdf;"></div>
<div class="b" style="left:820px;top:219px;width:1px;height:29px;background:#dfdfdf;"></div>
<div class="b" style="left:889px;top:219px;width:1px;height:29px;background:#dfdfdf;"></div>
<div class="b" style="left:958px;top:219px;width:1px;height:29px;background:#dfdfdf;"></div>
<svg class="b" style="left:234px;top:226px" width="14" height="14" viewBox="0 0 14 14" shape-rendering="crispEdges"><rect x="0.5" y="0.5" width="13" height="13" fill="#ececfb" stroke="#3b3d4a"/></svg>
<svg class="b" style="left:234px;top:226px" width="14" height="14" viewBox="0 0 14 14"><path d="M1 8.5 L2 8.5 L4.2 4.2 L6.5 11.5 L9.5 2 L12 8.5 L13 8.5" fill="none" stroke="#3b3d4a" stroke-width="1.1"/></svg>
<svg class="b" style="left:274px;top:227px" width="11" height="11" viewBox="0 0 11 11" shape-rendering="crispEdges"><rect x="0.5" y="0.5" width="10" height="10" fill="#fff" stroke="#a0a0a0"/></svg>
<svg class="b" style="left:274px;top:227px" width="11" height="11" viewBox="0 0 11 11"><path d="M2.2 5.6 L4.5 8.4 L8.8 3.4" fill="none" stroke="#000" stroke-width="2.2"/></svg>
<div class="t" style="left:316px;top:227.69px;font-size:11px;line-height:11px;color:#000;">Level 2</div>
<div class="t" style="left:424px;top:227.69px;font-size:11px;line-height:11px;color:#000;">Cosinus 2</div>
<div class="t" style="left:650px;top:227.69px;font-size:11px;line-height:11px;color:#000;">Group 1</div>
<svg class="b" style="left:761px;top:227px" width="12" height="12" viewBox="0 0 12 12" shape-rendering="crispEdges"><rect x="0.5" y="0.5" width="10" height="10" fill="#fff" stroke="#a0a0a0"/></svg>
<div class="t" style="left:682px;width:200px;text-align:right;top:227.69px;font-size:11px;line-height:11px;color:#000;">0</div>
<div class="t" style="left:751px;width:200px;text-align:right;top:227.69px;font-size:11px;line-height:11px;color:#000;">100</div>
<div class="b" style="left:231px;top:248px;width:737px;height:28px;background:#f4f4f4;"></div>
<div class="b" style="left:231px;top:276px;width:737px;height:1px;background:#dfdfdf;"></div>
<div class="b" style="left:252px;top:248px;width:1px;height:29px;background:#dfdfdf;"></div>
<div class="b" style="left:306px;top:248px;width:1px;height:29px;background:#dfdfdf;"></div>
<div class="b" style="left:414px;top:248px;width:1px;height:29px;background:#dfdfdf;"></div>
<div class="b" style="left:534px;top:248px;width:1px;height:29px;background:#dfdfdf;"></div>
<div class="b" style="left:642px;top:248px;width:1px;height:29px;background:#dfdfdf;"></div>
<div class="b" style="left:712px;top:248px;width:1px;height:29px;background:#dfdfdf;"></div>
<div class="b" style="left:820px;top:248px;width:1px;height:29px;background:#dfdfdf;"></div>
<div class="b" style="left:889px;top:248px;width:1px;height:29px;background:#dfdfdf;"></div>
<div class="b" style="left:958px;top:248px;width:1px;height:29px;background:#dfdfdf;"></div>
<svg class="b" style="left:234px;top:255px" width="14" height="14" viewBox="0 0 14 14" shape-rendering="crispEdges"><rect x="0.5" y="0.5" width="13" height="13" fill="#ececfb" stroke="#3b3d4a"/></svg>
<svg class="b" style="left:234px;top:255px" width="14" height="14" viewBox="0 0 14 14"><path d="M1 8.5 L2 8.5 L4.2 4.2 L6.5 11.5 L9.5 2 L12 8.5 L13 8.5" fill="none" stroke="#3b3d4a" stroke-width="1.1"/></svg>
<svg class="b" style="left:274px;top:256px" width="11" height="11" viewBox="0 0 11 11" shape-rendering="crispEdges"><rect x="0.5" y="0.5" width="10" height="10" fill="#fff" stroke="#a0a0a0"/></svg>
<svg class="b" style="left:274px;top:256px" width="11" height="11" viewBox="0 0 11 11"><path d="M2.2 5.6 L4.5 8.4 L8.8 3.4" fill="none" stroke="#000" stroke-width="2.2"/></svg>
<div class="t" style="left:316px;top:256.69px;font-size:11px;line-height:11px;color:#000;">Local Hour</div>
<div class="t" style="left:424px;top:256.69px;font-size:11px;line-height:11px;color:#000;">Local Hour</div>
<div class="t" style="left:650px;top:256.69px;font-size:11px;line-height:11px;color:#000;">Group 1</div>
<svg class="b" style="left:761px;top:256px" width="12" height="12" viewBox="0 0 12 12" shape-rendering="crispEdges"><rect x="0.5" y="0.5" width="10" height="10" fill="#fff" stroke="#a0a0a0"/></svg>
<div class="t" style="left:682px;width:200px;text-align:right;top:256.69px;font-size:11px;line-height:11px;color:#000;">0</div>
<div class="t" style="left:751px;width:200px;text-align:right;top:256.69px;font-size:11px;line-height:11px;color:#000;">100</div>
<div class="b" style="left:231px;top:277px;width:737px;height:28px;background:#fff;"></div>
<div class="b" style="left:231px;top:305px;width:737px;height:1px;background:#dfdfdf;"></div>
<div class="b" style="left:252px;top:277px;width:1px;height:29px;background:#dfdfdf;"></div>
<div class="b" style="left:306px;top:277px;width:1px;height:29px;background:#dfdfdf;"></div>
<div class="b" style="left:414px;top:277px;width:1px;height:29px;background:#dfdfdf;"></div>
<div class="b" style="left:534px;top:277px;width:1px;height:29px;background:#dfdfdf;"></div>
<div class="b" style="left:642px;top:277px;width:1px;height:29px;background:#dfdfdf;"></div>
<div class="b" style="left:712px;top:277px;width:1px;height:29px;background:#dfdfdf;"></div>
<div class="b" style="left:820px;top:277px;width:1px;height:29px;background:#dfdfdf;"></div>
<div class="b" style="left:889px;top:277px;width:1px;height:29px;background:#dfdfdf;"></div>
<div class="b" style="left:958px;top:277px;width:1px;height:29px;background:#dfdfdf;"></div>
<svg class="b" style="left:234px;top:284px" width="14" height="14" viewBox="0 0 14 14" shape-rendering="crispEdges"><rect x="0.5" y="0.5" width="13" height="13" fill="#ececfb" stroke="#3b3d4a"/></svg>
<svg class="b" style="left:234px;top:284px" width="14" height="14" viewBox="0 0 14 14"><path d="M1 8.5 L2 8.5 L4.2 4.2 L6.5 11.5 L9.5 2 L12 8.5 L13 8.5" fill="none" stroke="#3b3d4a" stroke-width="1.1"/></svg>
<svg class="b" style="left:274px;top:285px" width="11" height="11" viewBox="0 0 11 11" shape-rendering="crispEdges"><rect x="0.5" y="0.5" width="10" height="10" fill="#fff" stroke="#a0a0a0"/></svg>
<svg class="b" style="left:274px;top:285px" width="11" height="11" viewBox="0 0 11 11"><path d="M2.2 5.6 L4.5 8.4 L8.8 3.4" fill="none" stroke="#000" stroke-width="2.2"/></svg>
<div class="t" style="left:316px;top:285.69px;font-size:11px;line-height:11px;color:#000;">Local Minute</div>
<div class="t" style="left:424px;top:285.69px;font-size:11px;line-height:11px;color:#000;">Local Minute</div>
<div class="t" style="left:650px;top:285.69px;font-size:11px;line-height:11px;color:#000;">Group 1</div>
<svg class="b" style="left:761px;top:285px" width="12" height="12" viewBox="0 0 12 12" shape-rendering="crispEdges"><rect x="0.5" y="0.5" width="10" height="10" fill="#fff" stroke="#a0a0a0"/></svg>
<div class="t" style="left:682px;width:200px;text-align:right;top:285.69px;font-size:11px;line-height:11px;color:#000;">0</div>
<div class="t" style="left:751px;width:200px;text-align:right;top:285.69px;font-size:11px;line-height:11px;color:#000;">100</div>
<div class="b" style="left:231px;top:306px;width:737px;height:28px;background:#f4f4f4;"></div>
<div class="b" style="left:231px;top:334px;width:737px;height:1px;background:#dfdfdf;"></div>
<div class="b" style="left:252px;top:306px;width:1px;height:29px;background:#dfdfdf;"></div>
<div class="b" style="left:306px;top:306px;width:1px;height:29px;background:#dfdfdf;"></div>
<div class="b" style="left:414px;top:306px;width:1px;height:29px;background:#dfdfdf;"></div>
<div class="b" style="left:534px;top:306px;width:1px;height:29px;background:#dfdfdf;"></div>
<div class="b" style="left:642px;top:306px;width:1px;height:29px;background:#dfdfdf;"></div>
<div class="b" style="left:712px;top:306px;width:1px;height:29px;background:#dfdfdf;"></div>
<div class="b" style="left:820px;top:306px;width:1px;height:29px;background:#dfdfdf;"></div>
<div class="b" style="left:889px;top:306px;width:1px;height:29px;background:#dfdfdf;"></div>
<div class="b" style="left:958px;top:306px;width:1px;height:29px;background:#dfdfdf;"></div>
<svg class="b" style="left:234px;top:313px" width="14" height="14" viewBox="0 0 14 14" shape-rendering="crispEdges"><rect x="0.5" y="0.5" width="13" height="13" fill="#ececfb" stroke="#3b3d4a"/></svg>
<svg class="b" style="left:234px;top:313px" width="14" height="14" viewBox="0 0 14 14"><path d="M1 8.5 L2 8.5 L4.2 4.2 L6.5 11.5 L9.5 2 L12 8.5 L13 8.5" fill="none" stroke="#3b3d4a" stroke-width="1.1"/></svg>
<svg class="b" style="left:274px;top:314px" width="11" height="11" viewBox="0 0 11 11" shape-rendering="crispEdges"><rect x="0.5" y="0.5" width="10" height="10" fill="#fff" stroke="#a0a0a0"/></svg>
<svg class="b" style="left:274px;top:314px" width="11" height="11" viewBox="0 0 11 11"><path d="M2.2 5.6 L4.5 8.4 L8.8 3.4" fill="none" stroke="#000" stroke-width="2.2"/></svg>
<div class="t" style="left:316px;top:314.69px;font-size:11px;line-height:11px;color:#000;">Local Second</div>
<div class="t" style="left:424px;top:314.69px;font-size:11px;line-height:11px;color:#000;">Local Second</div>
<div class="t" style="left:650px;top:314.69px;font-size:11px;line-height:11px;color:#000;">Group 1</div>
<svg class="b" style="left:761px;top:314px" width="12" height="12" viewBox="0 0 12 12" shape-rendering="crispEdges"><rect x="0.5" y="0.5" width="10" height="10" fill="#fff" stroke="#a0a0a0"/></svg>
<div class="t" style="left:682px;width:200px;text-align:right;top:314.69px;font-size:11px;line-height:11px;color:#000;">0</div>
<div class="t" style="left:751px;width:200px;text-align:right;top:314.69px;font-size:11px;line-height:11px;color:#000;">100</div>
<div class="b" style="left:231px;top:335px;width:737px;height:28px;background:#fff;"></div>
<div class="b" style="left:231px;top:363px;width:737px;height:1px;background:#dfdfdf;"></div>
<div class="b" style="left:252px;top:335px;width:1px;height:29px;background:#dfdfdf;"></div>
<div class="b" style="left:306px;top:335px;width:1px;height:29px;background:#dfdfdf;"></div>
<div class="b" style="left:414px;top:335px;width:1px;height:29px;background:#dfdfdf;"></div>
<div class="b" style="left:534px;top:335px;width:1px;height:29px;background:#dfdfdf;"></div>
<div class="b" style="left:642px;top:335px;width:1px;height:29px;background:#dfdfdf;"></div>
<div class="b" style="left:712px;top:335px;width:1px;height:29px;background:#dfdfdf;"></div>
<div class="b" style="left:820px;top:335px;width:1px;height:29px;background:#dfdfdf;"></div>
<div class="b" style="left:889px;top:335px;width:1px;height:29px;background:#dfdfdf;"></div>
<div class="b" style="left:958px;top:335px;width:1px;height:29px;background:#dfdfdf;"></div>
<svg class="b" style="left:234px;top:342px" width="14" height="14" viewBox="0 0 14 14" shape-rendering="crispEdges"><rect x="0.5" y="0.5" width="13" height="13" fill="#ececfb" stroke="#3b3d4a"/></svg>
<svg class="b" style="left:234px;top:342px" width="14" height="14" viewBox="0 0 14 14"><path d="M1 8.5 L2 8.5 L4.2 4.2 L6.5 11.5 L9.5 2 L12 8.5 L13 8.5" fill="none" stroke="#3b3d4a" stroke-width="1.1"/></svg>
<svg class="b" style="left:274px;top:343px" width="11" height="11" viewBox="0 0 11 11" shape-rendering="crispEdges"><rect x="0.5" y="0.5" width="10" height="10" fill="#fff" stroke="#a0a0a0"/></svg>
<svg class="b" style="left:274px;top:343px" width="11" height="11" viewBox="0 0 11 11"><path d="M2.2 5.6 L4.5 8.4 L8.8 3.4" fill="none" stroke="#000" stroke-width="2.2"/></svg>
<div class="t" style="left:316px;top:343.69px;font-size:11px;line-height:11px;color:#000;">Local Time</div>
<div class="t" style="left:424px;top:343.69px;font-size:11px;line-height:11px;color:#000;">Local Time</div>
<div class="t" style="left:650px;top:343.69px;font-size:11px;line-height:11px;color:#000;">Group 1</div>
<svg class="b" style="left:761px;top:343px" width="12" height="12" viewBox="0 0 12 12" shape-rendering="crispEdges"><rect x="0.5" y="0.5" width="10" height="10" fill="#fff" stroke="#a0a0a0"/></svg>
<div class="t" style="left:682px;width:200px;text-align:right;top:343.69px;font-size:11px;line-height:11px;color:#000;">0</div>
<div class="t" style="left:751px;width:200px;text-align:right;top:343.69px;font-size:11px;line-height:11px;color:#000;">100</div>
<div class="b" style="left:231px;top:364px;width:737px;height:28px;background:#f4f4f4;"></div>
<div class="b" style="left:231px;top:392px;width:737px;height:1px;background:#dfdfdf;"></div>
<div class="b" style="left:252px;top:364px;width:1px;height:29px;background:#dfdfdf;"></div>
<div class="b" style="left:306px;top:364px;width:1px;height:29px;background:#dfdfdf;"></div>
<div class="b" style="left:414px;top:364px;width:1px;height:29px;background:#dfdfdf;"></div>
<div class="b" style="left:534px;top:364px;width:1px;height:29px;background:#dfdfdf;"></div>
<div class="b" style="left:642px;top:364px;width:1px;height:29px;background:#dfdfdf;"></div>
<div class="b" style="left:712px;top:364px;width:1px;height:29px;background:#dfdfdf;"></div>
<div class="b" style="left:820px;top:364px;width:1px;height:29px;background:#dfdfdf;"></div>
<div class="b" style="left:889px;top:364px;width:1px;height:29px;background:#dfdfdf;"></div>
<div class="b" style="left:958px;top:364px;width:1px;height:29px;background:#dfdfdf;"></div>
<svg class="b" style="left:234px;top:371px" width="14" height="14" viewBox="0 0 14 14" shape-rendering="crispEdges"><rect x="0.5" y="0.5" width="13" height="13" fill="#ececfb" stroke="#3b3d4a"/></svg>
<svg class="b" style="left:234px;top:371px" width="14" height="14" viewBox="0 0 14 14"><path d="M1 8.5 L2 8.5 L4.2 4.2 L6.5 11.5 L9.5 2 L12 8.5 L13 8.5" fill="none" stroke="#3b3d4a" stroke-width="1.1"/></svg>
<svg class="b" style="left:274px;top:372px" width="11" height="11" viewBox="0 0 11 11" shape-rendering="crispEdges"><rect x="0.5" y="0.5" width="10" height="10" fill="#fff" stroke="#a0a0a0"/></svg>
<svg class="b" style="left:274px;top:372px" width="11" height="11" viewBox="0 0 11 11"><path d="M2.2 5.6 L4.5 8.4 L8.8 3.4" fill="none" stroke="#000" stroke-width="2.2"/></svg>
<div class="t" style="left:316px;top:372.69px;font-size:11px;line-height:11px;color:#1e1ea6;">MachineOP</div>
<div class="t" style="left:424px;top:372.69px;font-size:11px;line-height:11px;color:#1e1ea6;">MachineOP</div>
<div class="t" style="left:650px;top:372.69px;font-size:11px;line-height:11px;color:#1e1ea6;">Group 1</div>
<svg class="b" style="left:761px;top:372px" width="12" height="12" viewBox="0 0 12 12" shape-rendering="crispEdges"><rect x="0.5" y="0.5" width="10" height="10" fill="#fff" stroke="#a0a0a0"/></svg>
<div class="t" style="left:682px;width:200px;text-align:right;top:372.69px;font-size:11px;line-height:11px;color:#1e1ea6;">0</div>
<div class="t" style="left:751px;width:200px;text-align:right;top:372.69px;font-size:11px;line-height:11px;color:#1e1ea6;">100</div>
<div class="b" style="left:231px;top:393px;width:737px;height:28px;background:#fff;"></div>
<div class="b" style="left:231px;top:421px;width:737px;height:1px;background:#dfdfdf;"></div>
<div class="b" style="left:252px;top:393px;width:1px;height:29px;background:#dfdfdf;"></div>
<div class="b" style="left:306px;top:393px;width:1px;height:29px;background:#dfdfdf;"></div>
<div class="b" style="left:414px;top:393px;width:1px;height:29px;background:#dfdfdf;"></div>
<div class="b" style="left:534px;top:393px;width:1px;height:29px;background:#dfdfdf;"></div>
<div class="b" style="left:642px;top:393px;width:1px;height:29px;background:#dfdfdf;"></div>
<div class="b" style="left:712px;top:393px;width:1px;height:29px;background:#dfdfdf;"></div>
<div class="b" style="left:820px;top:393px;width:1px;height:29px;background:#dfdfdf;"></div>
<div class="b" style="left:889px;top:393px;width:1px;height:29px;background:#dfdfdf;"></div>
<div class="b" style="left:958px;top:393px;width:1px;height:29px;background:#dfdfdf;"></div>
<svg class="b" style="left:234px;top:400px" width="14" height="14" viewBox="0 0 14 14" shape-rendering="crispEdges"><rect x="0.5" y="0.5" width="13" height="13" fill="#ececfb" stroke="#3b3d4a"/></svg>
<svg class="b" style="left:234px;top:400px" width="14" height="14" viewBox="0 0 14 14"><path d="M1 8.5 L2 8.5 L4.2 4.2 L6.5 11.5 L9.5 2 L12 8.5 L13 8.5" fill="none" stroke="#3b3d4a" stroke-width="1.1"/></svg>
<svg class="b" style="left:274px;top:401px" width="11" height="11" viewBox="0 0 11 11" shape-rendering="crispEdges"><rect x="0.5" y="0.5" width="10" height="10" fill="#fff" stroke="#a0a0a0"/></svg>
<svg class="b" style="left:274px;top:401px" width="11" height="11" viewBox="0 0 11 11"><path d="M2.2 5.6 L4.5 8.4 L8.8 3.4" fill="none" stroke="#000" stroke-width="2.2"/></svg>
<div class="t" style="left:316px;top:401.69px;font-size:11px;line-height:11px;color:#1e1ea6;">OperationMode1</div>
<div class="t" style="left:424px;top:401.69px;font-size:11px;line-height:11px;color:#1e1ea6;">OperationMode1</div>
<div class="t" style="left:650px;top:401.69px;font-size:11px;line-height:11px;color:#1e1ea6;">Group 1</div>
<svg class="b" style="left:761px;top:401px" width="12" height="12" viewBox="0 0 12 12" shape-rendering="crispEdges"><rect x="0.5" y="0.5" width="10" height="10" fill="#fff" stroke="#a0a0a0"/></svg>
<div class="t" style="left:682px;width:200px;text-align:right;top:401.69px;font-size:11px;line-height:11px;color:#1e1ea6;">0</div>
<div class="t" style="left:751px;width:200px;text-align:right;top:401.69px;font-size:11px;line-height:11px;color:#1e1ea6;">100</div>
<div class="b" style="left:231px;top:422px;width:737px;height:28px;background:#f4f4f4;"></div>
<div class="b" style="left:231px;top:450px;width:737px;height:1px;background:#dfdfdf;"></div>
<div class="b" style="left:252px;top:422px;width:1px;height:29px;background:#dfdfdf;"></div>
<div class="b" style="left:306px;top:422px;width:1px;height:29px;background:#dfdfdf;"></div>
<div class="b" style="left:414px;top:422px;width:1px;height:29px;background:#dfdfdf;"></div>
<div class="b" style="left:534px;top:422px;width:1px;height:29px;background:#dfdfdf;"></div>
<div class="b" style="left:642px;top:422px;width:1px;height:29px;background:#dfdfdf;"></div>
<div class="b" style="left:712px;top:422px;width:1px;height:29px;background:#dfdfdf;"></div>
<div class="b" style="left:820px;top:422px;width:1px;height:29px;background:#dfdfdf;"></div>
<div class="b" style="left:889px;top:422px;width:1px;height:29px;background:#dfdfdf;"></div>
<div class="b" style="left:958px;top:422px;width:1px;height:29px;background:#dfdfdf;"></div>
<svg class="b" style="left:234px;top:429px" width="14" height="14" viewBox="0 0 14 14" shape-rendering="crispEdges"><rect x="0.5" y="0.5" width="13" height="13" fill="#ececfb" stroke="#3b3d4a"/></svg>
<svg class="b" style="left:234px;top:429px" width="14" height="14" viewBox="0 0 14 14"><path d="M1 8.5 L2 8.5 L4.2 4.2 L6.5 11.5 L9.5 2 L12 8.5 L13 8.5" fill="none" stroke="#3b3d4a" stroke-width="1.1"/></svg>
<svg class="b" style="left:274px;top:430px" width="11" height="11" viewBox="0 0 11 11" shape-rendering="crispEdges"><rect x="0.5" y="0.5" width="10" height="10" fill="#fff" stroke="#a0a0a0"/></svg>
<svg class="b" style="left:274px;top:430px" width="11" height="11" viewBox="0 0 11 11"><path d="M2.2 5.6 L4.5 8.4 L8.8 3.4" fill="none" stroke="#000" stroke-width="2.2"/></svg>
<div class="t" style="left:316px;top:430.69px;font-size:11px;line-height:11px;color:#1e1ea6;">OperationMode2</div>
<div class="t" style="left:424px;top:430.69px;font-size:11px;line-height:11px;color:#1e1ea6;">OperationMode2</div>
<div class="t" style="left:650px;top:430.69px;font-size:11px;line-height:11px;color:#1e1ea6;">Group 1</div>
<svg class="b" style="left:761px;top:430px" width="12" height="12" viewBox="0 0 12 12" shape-rendering="crispEdges"><rect x="0.5" y="0.5" width="10" height="10" fill="#fff" stroke="#a0a0a0"/></svg>
<div class="t" style="left:682px;width:200px;text-align:right;top:430.69px;font-size:11px;line-height:11px;color:#1e1ea6;">0</div>
<div class="t" style="left:751px;width:200px;text-align:right;top:430.69px;font-size:11px;line-height:11px;color:#1e1ea6;">100</div>
<div class="b" style="left:231px;top:451px;width:737px;height:28px;background:#fff;"></div>
<div class="b" style="left:231px;top:479px;width:737px;height:1px;background:#dfdfdf;"></div>
<div class="b" style="left:252px;top:451px;width:1px;height:29px;background:#dfdfdf;"></div>
<div class="b" style="left:306px;top:451px;width:1px;height:29px;background:#dfdfdf;"></div>
<div class="b" style="left:414px;top:451px;width:1px;height:29px;background:#dfdfdf;"></div>
<div class="b" style="left:534px;top:451px;width:1px;height:29px;background:#dfdfdf;"></div>
<div class="b" style="left:642px;top:451px;width:1px;height:29px;background:#dfdfdf;"></div>
<div class="b" style="left:712px;top:451px;width:1px;height:29px;background:#dfdfdf;"></div>
<div class="b" style="left:820px;top:451px;width:1px;height:29px;background:#dfdfdf;"></div>
<div class="b" style="left:889px;top:451px;width:1px;height:29px;background:#dfdfdf;"></div>
<div class="b" style="left:958px;top:451px;width:1px;height:29px;background:#dfdfdf;"></div>
<svg class="b" style="left:234px;top:458px" width="14" height="14" viewBox="0 0 14 14" shape-rendering="crispEdges"><rect x="0.5" y="0.5" width="13" height="13" fill="#ececfb" stroke="#3b3d4a"/></svg>
<svg class="b" style="left:234px;top:458px" width="14" height="14" viewBox="0 0 14 14"><path d="M1 8.5 L2 8.5 L4.2 4.2 L6.5 11.5 L9.5 2 L12 8.5 L13 8.5" fill="none" stroke="#3b3d4a" stroke-width="1.1"/></svg>
<svg class="b" style="left:274px;top:459px" width="11" height="11" viewBox="0 0 11 11" shape-rendering="crispEdges"><rect x="0.5" y="0.5" width="10" height="10" fill="#fff" stroke="#a0a0a0"/></svg>
<svg class="b" style="left:274px;top:459px" width="11" height="11" viewBox="0 0 11 11"><path d="M2.2 5.6 L4.5 8.4 L8.8 3.4" fill="none" stroke="#000" stroke-width="2.2"/></svg>
<div class="t" style="left:316px;top:459.69px;font-size:11px;line-height:11px;color:#1e1ea6;">OperationMode3</div>
<div class="t" style="left:424px;top:459.69px;font-size:11px;line-height:11px;color:#1e1ea6;">OperationMode3</div>
<div class="t" style="left:650px;top:459.69px;font-size:11px;line-height:11px;color:#1e1ea6;">Group 1</div>
<svg class="b" style="left:761px;top:459px" width="12" height="12" viewBox="0 0 12 12" shape-rendering="crispEdges"><rect x="0.5" y="0.5" width="10" height="10" fill="#fff" stroke="#a0a0a0"/></svg>
<div class="t" style="left:682px;width:200px;text-align:right;top:459.69px;font-size:11px;line-height:11px;color:#1e1ea6;">0</div>
<div class="t" style="left:751px;width:200px;text-align:right;top:459.69px;font-size:11px;line-height:11px;color:#1e1ea6;">100</div>
<div class="b" style="left:231px;top:480px;width:737px;height:28px;background:#f4f4f4;"></div>
<div class="b" style="left:231px;top:508px;width:737px;height:1px;background:#dfdfdf;"></div>
<div class="b" style="left:252px;top:480px;width:1px;height:29px;background:#dfdfdf;"></div>
<div class="b" style="left:306px;top:480px;width:1px;height:29px;background:#dfdfdf;"></div>
<div class="b" style="left:414px;top:480px;width:1px;height:29px;background:#dfdfdf;"></div>
<div class="b" style="left:534px;top:480px;width:1px;height:29px;background:#dfdfdf;"></div>
<div class="b" style="left:642px;top:480px;width:1px;height:29px;background:#dfdfdf;"></div>
<div class="b" style="left:712px;top:480px;width:1px;height:29px;background:#dfdfdf;"></div>
<div class="b" style="left:820px;top:480px;width:1px;height:29px;background:#dfdfdf;"></div>
<div class="b" style="left:889px;top:480px;width:1px;height:29px;background:#dfdfdf;"></div>
<div class="b" style="left:958px;top:480px;width:1px;height:29px;background:#dfdfdf;"></div>
<svg class="b" style="left:234px;top:487px" width="14" height="14" viewBox="0 0 14 14" shape-rendering="crispEdges"><rect x="0.5" y="0.5" width="13" height="13" fill="#ececfb" stroke="#3b3d4a"/></svg>
<svg class="b" style="left:234px;top:487px" width="14" height="14" viewBox="0 0 14 14"><path d="M1 8.5 L2 8.5 L4.2 4.2 L6.5 11.5 L9.5 2 L12 8.5 L13 8.5" fill="none" stroke="#3b3d4a" stroke-width="1.1"/></svg>
<svg class="b" style="left:274px;top:488px" width="11" height="11" viewBox="0 0 11 11" shape-rendering="crispEdges"><rect x="0.5" y="0.5" width="10" height="10" fill="#fff" stroke="#a0a0a0"/></svg>
<svg class="b" style="left:274px;top:488px" width="11" height="11" viewBox="0 0 11 11"><path d="M2.2 5.6 L4.5 8.4 L8.8 3.4" fill="none" stroke="#000" stroke-width="2.2"/></svg>
<div class="t" style="left:316px;top:488.69px;font-size:11px;line-height:11px;color:#000;">Sensor 1</div>
<div class="t" style="left:424px;top:488.69px;font-size:11px;line-height:11px;color:#000;">Square 1</div>
<div class="t" style="left:650px;top:488.69px;font-size:11px;line-height:11px;color:#000;">Group 1</div>
<svg class="b" style="left:761px;top:488px" width="12" height="12" viewBox="0 0 12 12" shape-rendering="crispEdges"><rect x="0.5" y="0.5" width="10" height="10" fill="#fff" stroke="#a0a0a0"/></svg>
<div class="t" style="left:682px;width:200px;text-align:right;top:488.69px;font-size:11px;line-height:11px;color:#000;">0</div>
<div class="t" style="left:751px;width:200px;text-align:right;top:488.69px;font-size:11px;line-height:11px;color:#000;">100</div>
<div class="b" style="left:231px;top:509px;width:737px;height:28px;background:#fff;"></div>
<div class="b" style="left:231px;top:537px;width:737px;height:1px;background:#dfdfdf;"></div>
<div class="b" style="left:252px;top:509px;width:1px;height:29px;background:#dfdfdf;"></div>
<div class="b" style="left:306px;top:509px;width:1px;height:29px;background:#dfdfdf;"></div>
<div class="b" style="left:414px;top:509px;width:1px;height:29px;background:#dfdfdf;"></div>
<div class="b" style="left:534px;top:509px;width:1px;height:29px;background:#dfdfdf;"></div>
<div class="b" style="left:642px;top:509px;width:1px;height:29px;background:#dfdfdf;"></div>
<div class="b" style="left:712px;top:509px;width:1px;height:29px;background:#dfdfdf;"></div>
<div class="b" style="left:820px;top:509px;width:1px;height:29px;background:#dfdfdf;"></div>
<div class="b" style="left:889px;top:509px;width:1px;height:29px;background:#dfdfdf;"></div>
<div class="b" style="left:958px;top:509px;width:1px;height:29px;background:#dfdfdf;"></div>
<svg class="b" style="left:234px;top:516px" width="14" height="14" viewBox="0 0 14 14" shape-rendering="crispEdges"><rect x="0.5" y="0.5" width="13" height="13" fill="#ececfb" stroke="#3b3d4a"/></svg>
<svg class="b" style="left:234px;top:516px" width="14" height="14" viewBox="0 0 14 14"><path d="M1 8.5 L2 8.5 L4.2 4.2 L6.5 11.5 L9.5 2 L12 8.5 L13 8.5" fill="none" stroke="#3b3d4a" stroke-width="1.1"/></svg>
<svg class="b" style="left:274px;top:517px" width="11" height="11" viewBox="0 0 11 11" shape-rendering="crispEdges"><rect x="0.5" y="0.5" width="10" height="10" fill="#fff" stroke="#a0a0a0"/></svg>
<svg class="b" style="left:274px;top:517px" width="11" height="11" viewBox="0 0 11 11"><path d="M2.2 5.6 L4.5 8.4 L8.8 3.4" fill="none" stroke="#000" stroke-width="2.2"/></svg>
<div class="t" style="left:316px;top:517.69px;font-size:11px;line-height:11px;color:#000;">Sensor 2</div>
<div class="t" style="left:424px;top:517.69px;font-size:11px;line-height:11px;color:#000;">Square 2</div>
<div class="t" style="left:650px;top:517.69px;font-size:11px;line-height:11px;color:#000;">Group 1</div>
<svg class="b" style="left:761px;top:517px" width="12" height="12" viewBox="0 0 12 12" shape-rendering="crispEdges"><rect x="0.5" y="0.5" width="10" height="10" fill="#fff" stroke="#a0a0a0"/></svg>
<div class="t" style="left:682px;width:200px;text-align:right;top:517.69px;font-size:11px;line-height:11px;color:#000;">0</div>
<div class="t" style="left:751px;width:200px;text-align:right;top:517.69px;font-size:11px;line-height:11px;color:#000;">100</div>
<div class="b" style="left:231px;top:538px;width:737px;height:28px;background:#f4f4f4;"></div>
<div class="b" style="left:231px;top:566px;width:737px;height:1px;background:#dfdfdf;"></div>
<div class="b" style="left:252px;top:538px;width:1px;height:29px;background:#dfdfdf;"></div>
<div class="b" style="left:306px;top:538px;width:1px;height:29px;background:#dfdfdf;"></div>
<div class="b" style="left:414px;top:538px;width:1px;height:29px;background:#dfdfdf;"></div>
<div class="b" style="left:534px;top:538px;width:1px;height:29px;background:#dfdfdf;"></div>
<div class="b" style="left:642px;top:538px;width:1px;height:29px;background:#dfdfdf;"></div>
<div class="b" style="left:712px;top:538px;width:1px;height:29px;background:#dfdfdf;"></div>
<div class="b" style="left:820px;top:538px;width:1px;height:29px;background:#dfdfdf;"></div>
<div class="b" style="left:889px;top:538px;width:1px;height:29px;background:#dfdfdf;"></div>
<div class="b" style="left:958px;top:538px;width:1px;height:29px;background:#dfdfdf;"></div>
<svg class="b" style="left:234px;top:545px" width="14" height="14" viewBox="0 0 14 14" shape-rendering="crispEdges"><rect x="0.5" y="0.5" width="13" height="13" fill="#ececfb" stroke="#3b3d4a"/></svg>
<svg class="b" style="left:234px;top:545px" width="14" height="14" viewBox="0 0 14 14"><path d="M1 8.5 L2 8.5 L4.2 4.2 L6.5 11.5 L9.5 2 L12 8.5 L13 8.5" fill="none" stroke="#3b3d4a" stroke-width="1.1"/></svg>
<svg class="b" style="left:274px;top:546px" width="11" height="11" viewBox="0 0 11 11" shape-rendering="crispEdges"><rect x="0.5" y="0.5" width="10" height="10" fill="#fff" stroke="#a0a0a0"/></svg>
<svg class="b" style="left:274px;top:546px" width="11" height="11" viewBox="0 0 11 11"><path d="M2.2 5.6 L4.5 8.4 L8.8 3.4" fill="none" stroke="#000" stroke-width="2.2"/></svg>
<div class="t" style="left:316px;top:546.69px;font-size:11px;line-height:11px;color:#000;">Servo 1</div>
<div class="t" style="left:424px;top:546.69px;font-size:11px;line-height:11px;color:#000;">Sawtooth 1</div>
<div class="t" style="left:650px;top:546.69px;font-size:11px;line-height:11px;color:#000;">Group 1</div>
<svg class="b" style="left:761px;top:546px" width="12" height="12" viewBox="0 0 12 12" shape-rendering="crispEdges"><rect x="0.5" y="0.5" width="10" height="10" fill="#fff" stroke="#a0a0a0"/></svg>
<div class="t" style="left:682px;width:200px;text-align:right;top:546.69px;font-size:11px;line-height:11px;color:#000;">0</div>
<div class="t" style="left:751px;width:200px;text-align:right;top:546.69px;font-size:11px;line-height:11px;color:#000;">100</div>
<div class="b" style="left:231px;top:567px;width:737px;height:28px;background:#fff;"></div>
<div class="b" style="left:231px;top:595px;width:737px;height:1px;background:#dfdfdf;"></div>
<div class="b" style="left:252px;top:567px;width:1px;height:29px;background:#dfdfdf;"></div>
<div class="b" style="left:306px;top:567px;width:1px;height:29px;background:#dfdfdf;"></div>
<div class="b" style="left:414px;top:567px;width:1px;height:29px;background:#dfdfdf;"></div>
<div class="b" style="left:534px;top:567px;width:1px;height:29px;background:#dfdfdf;"></div>
<div class="b" style="left:642px;top:567px;width:1px;height:29px;background:#dfdfdf;"></div>
<div class="b" style="left:712px;top:567px;width:1px;height:29px;background:#dfdfdf;"></div>
<div class="b" style="left:820px;top:567px;width:1px;height:29px;background:#dfdfdf;"></div>
<div class="b" style="left:889px;top:567px;width:1px;height:29px;background:#dfdfdf;"></div>
<div class="b" style="left:958px;top:567px;width:1px;height:29px;background:#dfdfdf;"></div>
<svg class="b" style="left:234px;top:574px" width="14" height="14" viewBox="0 0 14 14" shape-rendering="crispEdges"><rect x="0.5" y="0.5" width="13" height="13" fill="#ececfb" stroke="#3b3d4a"/></svg>
<svg class="b" style="left:234px;top:574px" width="14" height="14" viewBox="0 0 14 14"><path d="M1 8.5 L2 8.5 L4.2 4.2 L6.5 11.5 L9.5 2 L12 8.5 L13 8.5" fill="none" stroke="#3b3d4a" stroke-width="1.1"/></svg>
<svg class="b" style="left:274px;top:575px" width="11" height="11" viewBox="0 0 11 11" shape-rendering="crispEdges"><rect x="0.5" y="0.5" width="10" height="10" fill="#fff" stroke="#a0a0a0"/></svg>
<svg class="b" style="left:274px;top:575px" width="11" height="11" viewBox="0 0 11 11"><path d="M2.2 5.6 L4.5 8.4 L8.8 3.4" fill="none" stroke="#000" stroke-width="2.2"/></svg>
<div class="t" style="left:316px;top:575.69px;font-size:11px;line-height:11px;color:#000;">Servo 2</div>
<div class="t" style="left:424px;top:575.69px;font-size:11px;line-height:11px;color:#000;">Sawtooth 2</div>
<div class="t" style="left:650px;top:575.69px;font-size:11px;line-height:11px;color:#000;">Group 1</div>
<svg class="b" style="left:761px;top:575px" width="12" height="12" viewBox="0 0 12 12" shape-rendering="crispEdges"><rect x="0.5" y="0.5" width="10" height="10" fill="#fff" stroke="#a0a0a0"/></svg>
<div class="t" style="left:682px;width:200px;text-align:right;top:575.69px;font-size:11px;line-height:11px;color:#000;">0</div>
<div class="t" style="left:751px;width:200px;text-align:right;top:575.69px;font-size:11px;line-height:11px;color:#000;">100</div>
<div class="b" style="left:231px;top:596px;width:737px;height:28px;background:#f4f4f4;"></div>
<div class="b" style="left:231px;top:624px;width:737px;height:1px;background:#dfdfdf;"></div>
<div class="b" style="left:252px;top:596px;width:1px;height:29px;background:#dfdfdf;"></div>
<div class="b" style="left:306px;top:596px;width:1px;height:29px;background:#dfdfdf;"></div>
<div class="b" style="left:414px;top:596px;width:1px;height:29px;background:#dfdfdf;"></div>
<div class="b" style="left:534px;top:596px;width:1px;height:29px;background:#dfdfdf;"></div>
<div class="b" style="left:642px;top:596px;width:1px;height:29px;background:#dfdfdf;"></div>
<div class="b" style="left:712px;top:596px;width:1px;height:29px;background:#dfdfdf;"></div>
<div class="b" style="left:820px;top:596px;width:1px;height:29px;background:#dfdfdf;"></div>
<div class="b" style="left:889px;top:596px;width:1px;height:29px;background:#dfdfdf;"></div>
<div class="b" style="left:958px;top:596px;width:1px;height:29px;background:#dfdfdf;"></div>
<svg class="b" style="left:234px;top:603px" width="14" height="14" viewBox="0 0 14 14" shape-rendering="crispEdges"><rect x="0.5" y="0.5" width="13" height="13" fill="#ececfb" stroke="#3b3d4a"/></svg>
<svg class="b" style="left:234px;top:603px" width="14" height="14" viewBox="0 0 14 14"><path d="M1 8.5 L2 8.5 L4.2 4.2 L6.5 11.5 L9.5 2 L12 8.5 L13 8.5" fill="none" stroke="#3b3d4a" stroke-width="1.1"/></svg>
<svg class="b" style="left:274px;top:604px" width="11" height="11" viewBox="0 0 11 11" shape-rendering="crispEdges"><rect x="0.5" y="0.5" width="10" height="10" fill="#fff" stroke="#a0a0a0"/></svg>
<svg class="b" style="left:274px;top:604px" width="11" height="11" viewBox="0 0 11 11"><path d="M2.2 5.6 L4.5 8.4 L8.8 3.4" fill="none" stroke="#000" stroke-width="2.2"/></svg>
<div class="t" style="left:316px;top:604.69px;font-size:11px;line-height:11px;color:#000;">Setpoint 1</div>
<div class="t" style="left:424px;top:604.69px;font-size:11px;line-height:11px;color:#000;">Buffer 1</div>
<div class="t" style="left:650px;top:604.69px;font-size:11px;line-height:11px;color:#000;">Group 1</div>
<svg class="b" style="left:761px;top:604px" width="12" height="12" viewBox="0 0 12 12" shape-rendering="crispEdges"><rect x="0.5" y="0.5" width="10" height="10" fill="#fff" stroke="#a0a0a0"/></svg>
<div class="t" style="left:682px;width:200px;text-align:right;top:604.69px;font-size:11px;line-height:11px;color:#000;">0</div>
<div class="t" style="left:751px;width:200px;text-align:right;top:604.69px;font-size:11px;line-height:11px;color:#000;">100</div>
<div class="b" style="left:231px;top:625px;width:737px;height:28px;background:#fff;"></div>
<div class="b" style="left:231px;top:653px;width:737px;height:1px;background:#dfdfdf;"></div>
<div class="b" style="left:252px;top:625px;width:1px;height:29px;background:#dfdfdf;"></div>
<div class="b" style="left:306px;top:625px;width:1px;height:29px;background:#dfdfdf;"></div>
<div class="b" style="left:414px;top:625px;width:1px;height:29px;background:#dfdfdf;"></div>
<div class="b" style="left:534px;top:625px;width:1px;height:29px;background:#dfdfdf;"></div>
<div class="b" style="left:642px;top:625px;width:1px;height:29px;background:#dfdfdf;"></div>
<div class="b" style="left:712px;top:625px;width:1px;height:29px;background:#dfdfdf;"></div>
<div class="b" style="left:820px;top:625px;width:1px;height:29px;background:#dfdfdf;"></div>
<div class="b" style="left:889px;top:625px;width:1px;height:29px;background:#dfdfdf;"></div>
<div class="b" style="left:958px;top:625px;width:1px;height:29px;background:#dfdfdf;"></div>
<svg class="b" style="left:234px;top:632px" width="14" height="14" viewBox="0 0 14 14" shape-rendering="crispEdges"><rect x="0.5" y="0.5" width="13" height="13" fill="#ececfb" stroke="#3b3d4a"/></svg>
<svg class="b" style="left:234px;top:632px" width="14" height="14" viewBox="0 0 14 14"><path d="M1 8.5 L2 8.5 L4.2 4.2 L6.5 11.5 L9.5 2 L12 8.5 L13 8.5" fill="none" stroke="#3b3d4a" stroke-width="1.1"/></svg>
<svg class="b" style="left:274px;top:633px" width="11" height="11" viewBox="0 0 11 11" shape-rendering="crispEdges"><rect x="0.5" y="0.5" width="10" height="10" fill="#fff" stroke="#a0a0a0"/></svg>
<svg class="b" style="left:274px;top:633px" width="11" height="11" viewBox="0 0 11 11"><path d="M2.2 5.6 L4.5 8.4 L8.8 3.4" fill="none" stroke="#000" stroke-width="2.2"/></svg>
<div class="t" style="left:316px;top:633.69px;font-size:11px;line-height:11px;color:#000;">Setpoint 2</div>
<div class="t" style="left:424px;top:633.69px;font-size:11px;line-height:11px;color:#000;">Buffer 2</div>
<div class="t" style="left:650px;top:633.69px;font-size:11px;line-height:11px;color:#000;">Group 1</div>
<svg class="b" style="left:761px;top:633px" width="12" height="12" viewBox="0 0 12 12" shape-rendering="crispEdges"><rect x="0.5" y="0.5" width="10" height="10" fill="#fff" stroke="#a0a0a0"/></svg>
<div class="t" style="left:682px;width:200px;text-align:right;top:633.69px;font-size:11px;line-height:11px;color:#000;">0</div>
<div class="t" style="left:751px;width:200px;text-align:right;top:633.69px;font-size:11px;line-height:11px;color:#000;">100</div>
<div class="b" style="left:231px;top:654px;width:737px;height:28px;background:#f4f4f4;"></div>
<div class="b" style="left:231px;top:682px;width:737px;height:1px;background:#dfdfdf;"></div>
<div class="b" style="left:252px;top:654px;width:1px;height:29px;background:#dfdfdf;"></div>
<div class="b" style="left:306px;top:654px;width:1px;height:29px;background:#dfdfdf;"></div>
<div class="b" style="left:414px;top:654px;width:1px;height:29px;background:#dfdfdf;"></div>
<div class="b" style="left:534px;top:654px;width:1px;height:29px;background:#dfdfdf;"></div>
<div class="b" style="left:642px;top:654px;width:1px;height:29px;background:#dfdfdf;"></div>
<div class="b" style="left:712px;top:654px;width:1px;height:29px;background:#dfdfdf;"></div>
<div class="b" style="left:820px;top:654px;width:1px;height:29px;background:#dfdfdf;"></div>
<div class="b" style="left:889px;top:654px;width:1px;height:29px;background:#dfdfdf;"></div>
<div class="b" style="left:958px;top:654px;width:1px;height:29px;background:#dfdfdf;"></div>
<svg class="b" style="left:234px;top:661px" width="14" height="14" viewBox="0 0 14 14" shape-rendering="crispEdges"><rect x="0.5" y="0.5" width="13" height="13" fill="#ececfb" stroke="#3b3d4a"/></svg>
<svg class="b" style="left:234px;top:661px" width="14" height="14" viewBox="0 0 14 14"><path d="M1 8.5 L2 8.5 L4.2 4.2 L6.5 11.5 L9.5 2 L12 8.5 L13 8.5" fill="none" stroke="#3b3d4a" stroke-width="1.1"/></svg>
<svg class="b" style="left:274px;top:662px" width="11" height="11" viewBox="0 0 11 11" shape-rendering="crispEdges"><rect x="0.5" y="0.5" width="10" height="10" fill="#fff" stroke="#a0a0a0"/></svg>
<svg class="b" style="left:274px;top:662px" width="11" height="11" viewBox="0 0 11 11"><path d="M2.2 5.6 L4.5 8.4 L8.8 3.4" fill="none" stroke="#000" stroke-width="2.2"/></svg>
<div class="t" style="left:316px;top:662.69px;font-size:11px;line-height:11px;color:#000;">Setpoint 3</div>
<div class="t" style="left:424px;top:662.69px;font-size:11px;line-height:11px;color:#000;">Buffer 3</div>
<div class="t" style="left:650px;top:662.69px;font-size:11px;line-height:11px;color:#000;">Group 1</div>
<svg class="b" style="left:761px;top:662px" width="12" height="12" viewBox="0 0 12 12" shape-rendering="crispEdges"><rect x="0.5" y="0.5" width="10" height="10" fill="#fff" stroke="#a0a0a0"/></svg>
<div class="t" style="left:682px;width:200px;text-align:right;top:662.69px;font-size:11px;line-height:11px;color:#000;">0</div>
<div class="t" style="left:751px;width:200px;text-align:right;top:662.69px;font-size:11px;line-height:11px;color:#000;">100</div>
<div class="b" style="left:231px;top:683px;width:737px;height:2px;background:#f4f4f4;"></div>
<div class="b" style="left:252px;top:683px;width:1px;height:2px;background:#dfdfdf;"></div>
<div class="b" style="left:306px;top:683px;width:1px;height:2px;background:#dfdfdf;"></div>
<div class="b" style="left:414px;top:683px;width:1px;height:2px;background:#dfdfdf;"></div>
<div class="b" style="left:534px;top:683px;width:1px;height:2px;background:#dfdfdf;"></div>
<div class="b" style="left:642px;top:683px;width:1px;height:2px;background:#dfdfdf;"></div>
<div class="b" style="left:712px;top:683px;width:1px;height:2px;background:#dfdfdf;"></div>
<div class="b" style="left:820px;top:683px;width:1px;height:2px;background:#dfdfdf;"></div>
<div class="b" style="left:889px;top:683px;width:1px;height:2px;background:#dfdfdf;"></div>
<div class="b" style="left:958px;top:683px;width:1px;height:2px;background:#dfdfdf;"></div>
<div class="b" style="left:968px;top:79px;width:16px;height:606px;background:#f3f3f3;"></div>
<div class="b" style="left:968px;top:79px;width:16px;height:5px;background:#fff;"></div>
<div class="b" style="left:968px;top:84px;width:16px;height:1px;background:#3f3f48;"></div>
<div class="b" style="left:968px;top:85px;width:16px;height:15px;background:#fff;"></div>
<svg class="b" style="left:973px;top:91px" width="7" height="4" viewBox="0 0 7 4" shape-rendering="crispEdges"><path d="M0 4 H7 L3.5 0 Z" fill="#000"/></svg>
<div class="b" style="left:968px;top:100px;width:16px;height:2px;background:#3f3f48;"></div>
<div class="b" style="left:968px;top:102px;width:16px;height:409px;background:#3f3f48;"></div>
<div class="b" style="left:969px;top:102px;width:15px;height:408px;background:#e6dfcf;"></div>
<div class="b" style="left:968px;top:668px;width:16px;height:17px;background:#3f3f48;"></div>
<div class="b" style="left:969px;top:669px;width:15px;height:15px;background:#fff;"></div>
<svg class="b" style="left:973px;top:675px" width="7" height="4" viewBox="0 0 7 4" shape-rendering="crispEdges"><path d="M0 0 H7 L3.5 4 Z" fill="#000"/></svg>
<div class="b" style="left:231px;top:685px;width:737px;height:17px;background:#f3f3f3;"></div>
<div class="b" style="left:231px;top:685px;width:5px;height:17px;background:#fff;"></div>
<div class="b" style="left:236px;top:685px;width:17px;height:17px;background:#3f3f48;"></div>
<div class="b" style="left:237px;top:686px;width:15px;height:15px;background:#fff;"></div>
<svg class="b" style="left:242px;top:690px" width="4" height="7" viewBox="0 0 4 7" shape-rendering="crispEdges"><path d="M4 0 V7 L0 3.5 Z" fill="#000"/></svg>
<div class="b" style="left:252px;top:685px;width:150px;height:17px;background:#3f3f48;"></div>
<div class="b" style="left:253px;top:686px;width:148px;height:15px;background:#e6dfcf;"></div>
<div class="b" style="left:951px;top:685px;width:17px;height:17px;background:#3f3f48;"></div>
<div class="b" style="left:952px;top:686px;width:15px;height:15px;background:#f7f7f7;"></div>
<svg class="b" style="left:958px;top:690px" width="4" height="7" viewBox="0 0 4 7" shape-rendering="crispEdges"><path d="M0 0 V7 L4 3.5 Z" fill="#000"/></svg>
<div class="b" style="left:231px;top:702px;width:753px;height:2px;background:#dcdcdc;"></div>
<div class="b" style="left:231px;top:704px;width:753px;height:18px;background:#e6dfcf;"></div>
<div class="b" style="left:231px;top:722px;width:753px;height:1px;background:#5a5a66;"></div>
<div class="b" style="left:231px;top:723px;width:753px;height:2px;background:#fff;"></div>
<svg class="b" style="left:237px;top:708px" width="8" height="10" viewBox="0 0 8 10"><path d="M1.3 1.6 L3.9 4 L6.5 1.6 M1.3 5.6 L3.9 8 L6.5 5.6" fill="none" stroke="#000" stroke-width="1.9"/></svg>
<div class="t" style="left:250px;top:707.69px;font-size:11px;line-height:11px;color:#000;">Signal Details</div>
<div class="b" style="left:0px;top:725px;width:984px;height:1px;background:#3f3f48;"></div>
<div class="b" style="left:0px;top:726px;width:984px;height:20px;background:#f4f4f4;"></div>
<div class="b" style="left:0px;top:726px;width:984px;height:2px;background:#fff;"></div>
<div class="b" style="left:1px;top:728px;width:65px;height:30px;border:1px solid #3f3f48;border-radius:3px"></div>
<div class="b" style="left:70px;top:728px;width:899px;height:30px;border:1px solid #3f3f48;border-radius:3px"></div>
<div class="t" style="left:5px;top:732.99px;font-size:11px;line-height:11px;color:#6a6a6a;">Item 0 of 25</div>
<div class="t" style="left:74px;top:732.99px;font-size:11px;line-height:11px;color:#6a6a6a;">0 selected</div>
<div class="b" style="left:982px;top:736px;width:2px;height:2px;background:#5b6f95;"></div>
<div class="b" style="left:978px;top:740px;width:2px;height:2px;background:#5b6f95;"></div>
<div class="b" style="left:982px;top:740px;width:2px;height:2px;background:#5b6f95;"></div>
<div class="b" style="left:974px;top:744px;width:2px;height:2px;background:#5b6f95;"></div>
<div class="b" style="left:978px;top:744px;width:2px;height:2px;background:#5b6f95;"></div>
<div class="b" style="left:982px;top:744px;width:2px;height:2px;background:#5b6f95;"></div>
</body></html>
